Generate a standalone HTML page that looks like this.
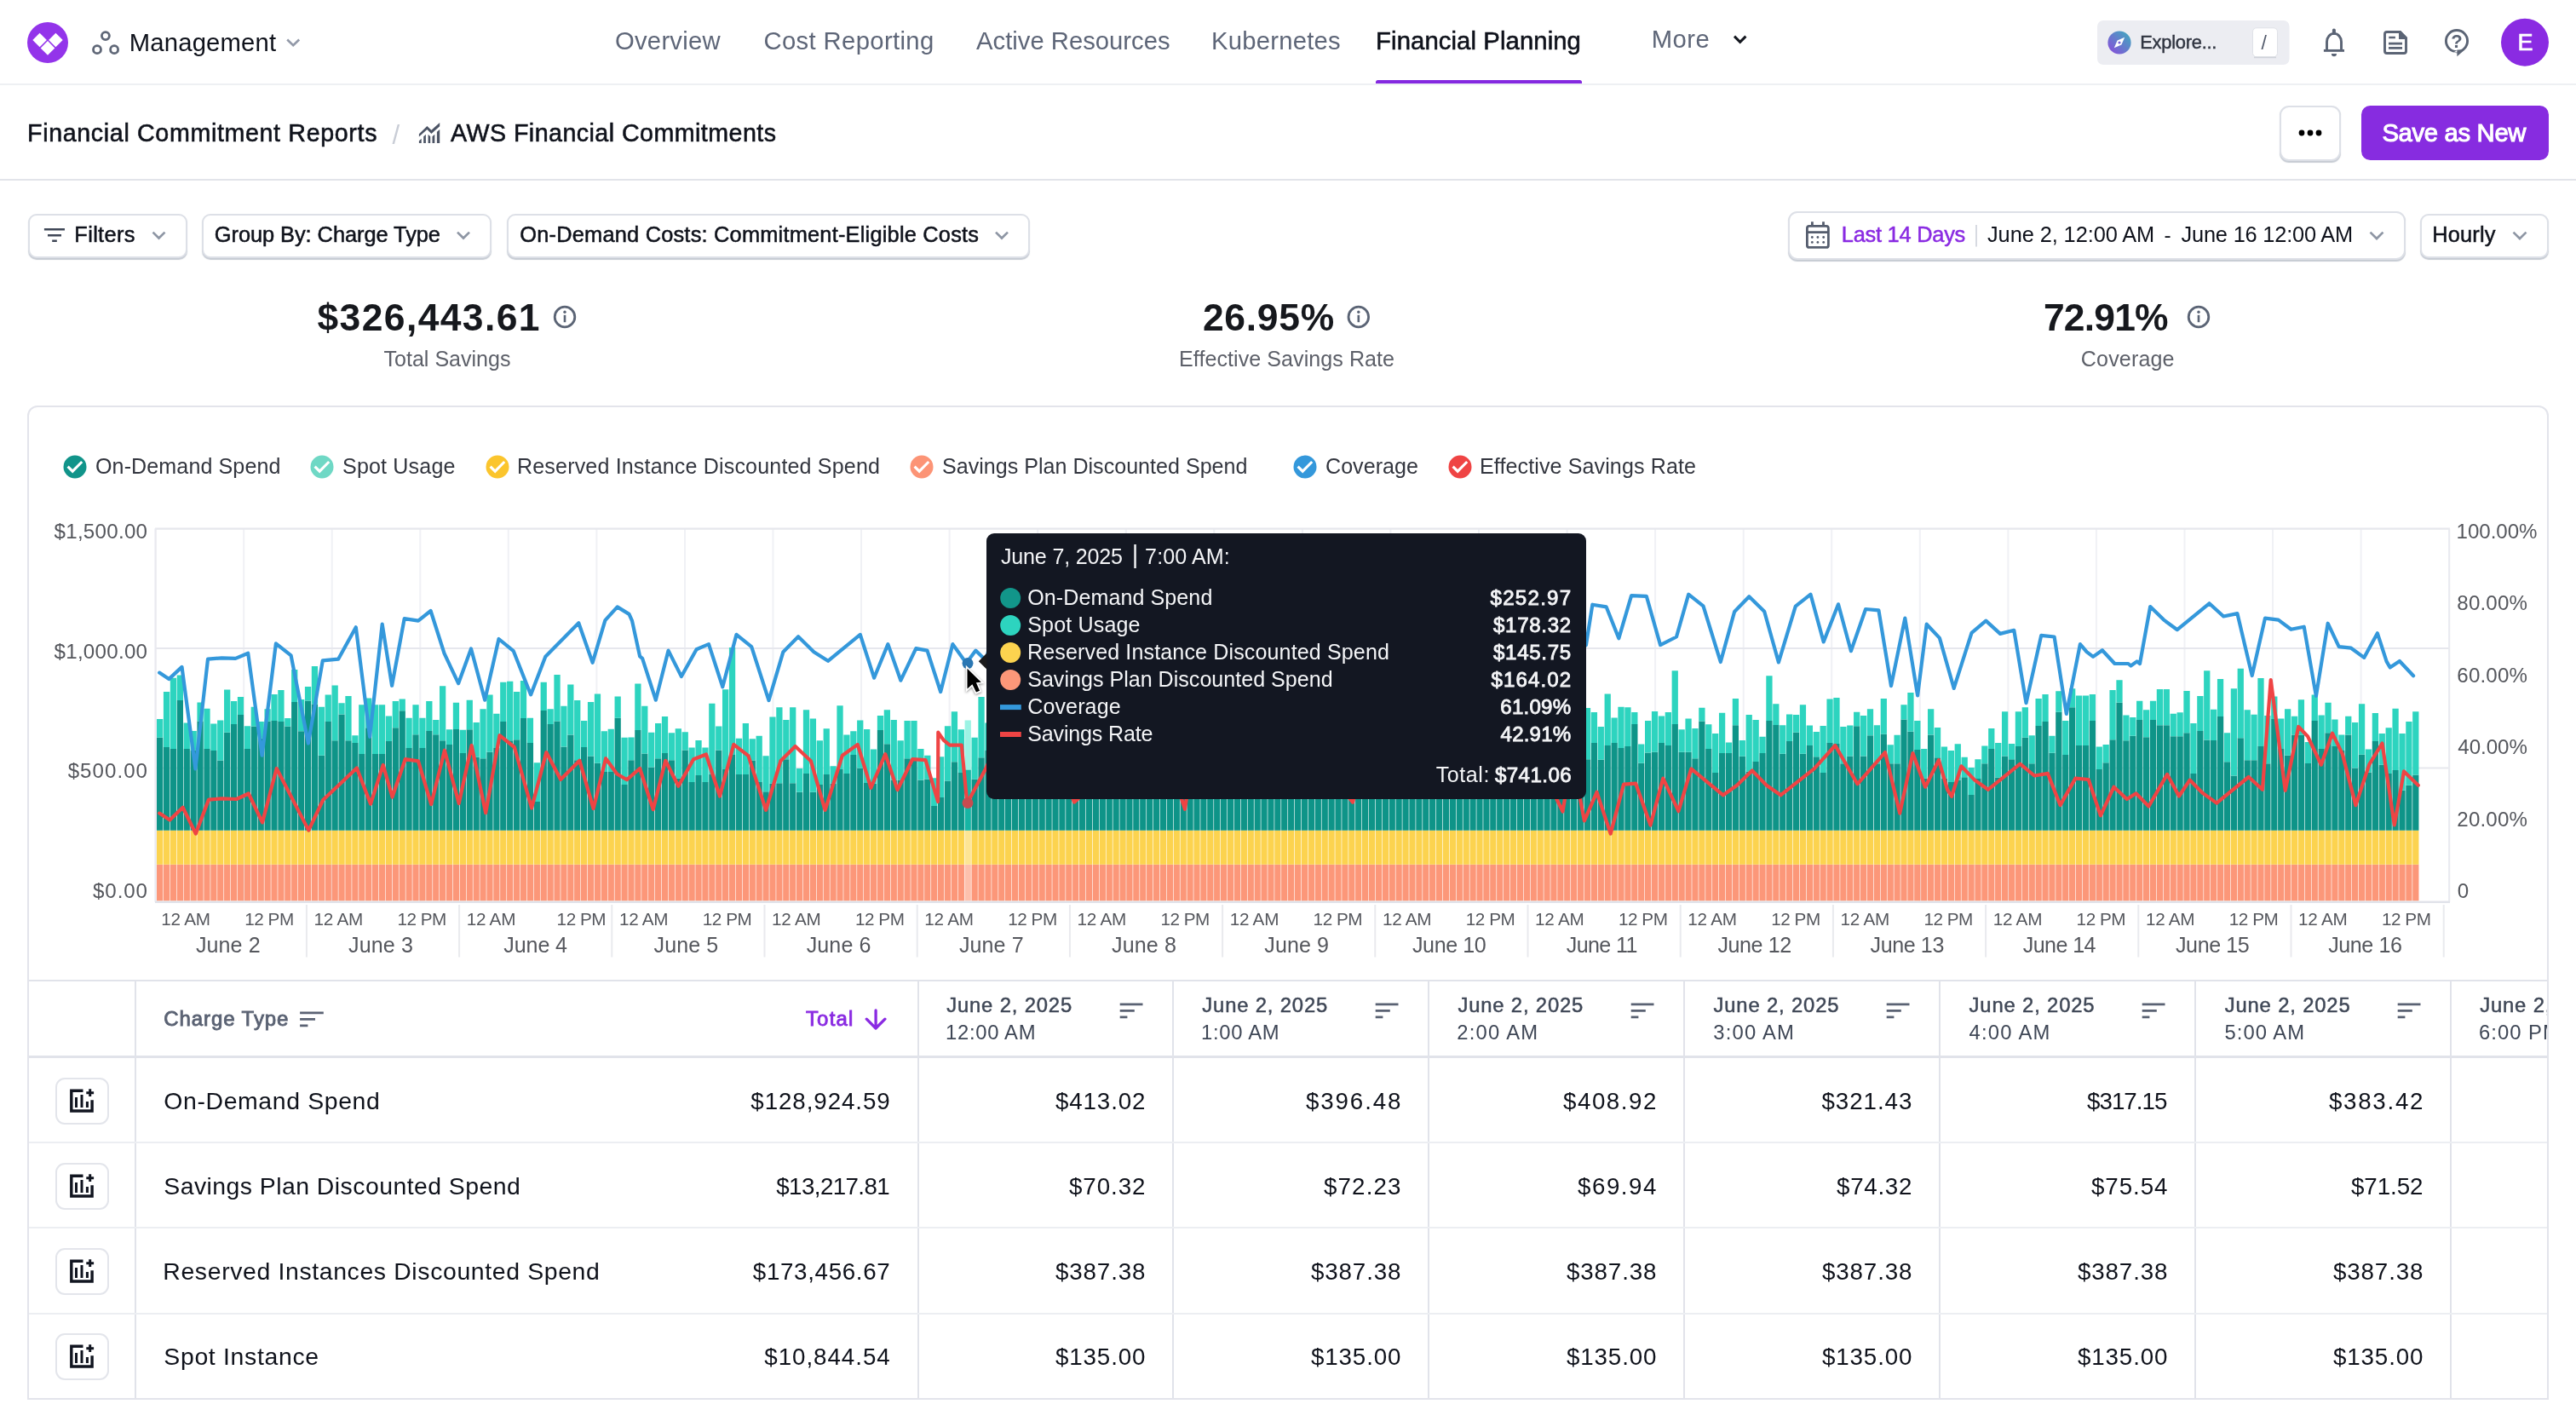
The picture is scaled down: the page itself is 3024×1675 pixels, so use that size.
<!DOCTYPE html>
<html lang="en">
<head>
<meta charset="utf-8">
<title>AWS Financial Commitments - Financial Commitment Reports</title>
<style>
html,body{margin:0;padding:0;background:#fff;}
body{width:3024px;height:1675px;position:relative;overflow:hidden;font-family:"Liberation Sans","DejaVu Sans",sans-serif;}
.t{position:absolute;white-space:nowrap;line-height:1;font-family:"Liberation Sans", "DejaVu Sans", sans-serif;}
.abs{position:absolute;}
.hline{position:absolute;left:0;width:3024px;background:#e6e8ed;}
.btn{position:absolute;box-sizing:border-box;background:#fff;border:2px solid #dde0e7;border-radius:10px;box-shadow:0 1.500px 1px rgba(120,130,150,.42);}
svg{position:absolute;overflow:visible;}
.card{position:absolute;left:32px;top:476px;width:2960px;height:1166.500px;box-sizing:border-box;border:2px solid #e3e4eb;border-radius:12px 12px 0 0;}
.vsep{position:absolute;width:2px;background:#e1e3ea;top:1152px;height:489px;}
.rsep{position:absolute;left:34px;width:2956px;height:2px;background:#eceef2;}
.ibtn{position:absolute;left:64.5px;width:63px;height:55px;box-sizing:border-box;border:2px solid #e3e5eb;border-radius:11px;background:#fff;}
</style>
</head>
<body>
<div id="app" style="position:absolute;left:0;top:0;width:3024px;height:1675px;will-change:transform;">
<header id="topnav">
  <svg width="3024" height="100" viewBox="0 0 3024 100" style="left:0;top:0">
    <!-- logo -->
    <circle cx="56" cy="50" r="24" fill="#9334ea"/>
    <g fill="#fff">
      <path d="M46.6 38.7 L54.9 47 L46.6 55.3 L38.3 47 Z"/>
      <path d="M65.4 38.7 L73.7 47 L65.4 55.3 L57.1 47 Z"/>
      <path d="M56 48.1 L64.3 56.4 L56 64.7 L47.7 56.4 Z"/>
    </g>
    <!-- management icon -->
    <g fill="none" stroke="#5f6777" stroke-width="2.800">
      <circle cx="123.900" cy="42.100" r="4.500"/><circle cx="114" cy="58.200" r="4.500"/><circle cx="134.100" cy="58.200" r="4.500"/>
    </g>
    <path d="M337.2 46.5 L344.2 53.3 L351.2 46.5" fill="none" stroke="#9299a8" stroke-width="2.6"/>
    <!-- more chevron -->
    <path d="M2036 42.6 L2042.7 49.3 L2049.4 42.6" fill="none" stroke="#14171f" stroke-width="3"/>
    <!-- active underline -->
    <path d="M1615 98 V96.500 a2.500 2.500 0 0 1 2.500 -2.500 H1854.500 a2.500 2.500 0 0 1 2.500 2.500 V98 Z" fill="#8429e0"/>
    <!-- explore box -->
    <rect x="2462" y="24" width="225.6" height="52" rx="7" fill="#ecedf2"/>
    <defs><linearGradient id="cg" x1="0" y1="1" x2="1" y2="0"><stop offset="0" stop-color="#8d48dc"/><stop offset="1" stop-color="#3bb0bd"/></linearGradient></defs>
    <circle cx="2488" cy="50" r="13.6" fill="url(#cg)"/>
    <path d="M2494.2 43.8 L2490.4 52.4 L2481.8 56.2 L2485.6 47.6 Z" fill="#fff"/>
    <circle cx="2488" cy="50" r="1.6" fill="#7a63d6"/>
    <rect x="2644.5" y="32.8" width="29" height="34" rx="4.5" fill="#fff" stroke="#dfe1e7" stroke-width="1"/>
    <path d="M2646 67.4 H2672" stroke="#cfd2da" stroke-width="1.6"/>
    <!-- bell -->
    <g fill="none" stroke="#5b6475" stroke-width="2.9">
      <path d="M2731.5 59.4 V49 a8.5 9.6 0 0 1 17 0 V59.4"/>
      <path d="M2727.9 59.4 H2752"/>
      <path d="M2739.9 35.6 V39" stroke-width="4" stroke-linecap="round"/>
    </g>
    <path d="M2736.9 63 H2743 a3.05 3.2 0 0 1 -6.1 0 Z" fill="#5b6475"/>
    <!-- doc -->
    <g>
      <path d="M2802 37.5 H2817.5 L2824.5 44.6 V60 a2.5 2.5 0 0 1 -2.5 2.5 H2802 a2.5 2.5 0 0 1 -2.500 -2.5 V40 a2.5 2.5 0 0 1 2.5 -2.5 Z" fill="none" stroke="#5b6475" stroke-width="2.9"/>
      <path d="M2816 36.1 H2818 L2825.9 44 V46 H2816 Z" fill="#5b6475"/>
      <path d="M2804.3 44 H2811.9 M2804 51.1 H2820 M2804 56.4 H2820" stroke="#5b6475" stroke-width="2.7"/>
    </g>
    <!-- help -->
    <circle cx="2884" cy="48.1" r="12.6" fill="none" stroke="#5b6475" stroke-width="2.9"/>
    <path d="M2884.400 58.500 L2893.200 58.500 L2884.400 66.300 Z" fill="#5b6475"/>
    <path d="M2880 61.600 L2884.400 61.600 L2884.400 59.200 Z" fill="#fff"/>
    <text x="2884" y="55.800" font-size="22" font-weight="700" fill="#5b6475" text-anchor="middle" font-family="Liberation Sans, sans-serif">?</text>
    <!-- avatar -->
    <circle cx="2964" cy="49.7" r="28" fill="#8a2be2"/>
  </svg>
  <div class="hline" style="top:98px;height:2px;background:#eef0f3"></div>
<span class="t" id="t0" style="left:151.8px;top:36.0px;font-size:29.26px;color:#0f121b;letter-spacing:0.177px;">Management</span>
<span class="t" id="t1" style="left:722.0px;top:34.0px;font-size:29.26px;color:#5e6678;letter-spacing:0.246px;">Overview</span>
<span class="t" id="t2" style="left:896.5px;top:34.0px;font-size:29.26px;color:#5e6678;letter-spacing:0.359px;">Cost Reporting</span>
<span class="t" id="t3" style="left:1146.0px;top:34.0px;font-size:29.26px;color:#5e6678;letter-spacing:0.003px;">Active Resources</span>
<span class="t" id="t4" style="left:1422.0px;top:34.0px;font-size:29.26px;color:#5e6678;letter-spacing:0.224px;">Kubernetes</span>
<span class="t" id="t5" style="left:1615.1px;top:34.0px;font-size:29.26px;color:#0f121b;-webkit-text-stroke:0.59px #0f121b;letter-spacing:0.103px;">Financial Planning</span>
<span class="t" id="t6" style="left:1938.8px;top:32.0px;font-size:29.26px;color:#5e6678;letter-spacing:0.409px;">More</span>
<span class="t" id="t7" style="left:2512.2px;top:39.0px;font-size:21.95px;color:#2f3440;-webkit-text-stroke:0.44px #2f3440;letter-spacing:-0.268px;">Explore...</span>
<span class="t" id="t8" style="left:2654.5px;top:39.0px;font-size:23.11px;color:#555d6e;letter-spacing:0.000px;">/</span>
<span class="t" id="t9" style="left:2955.6px;top:36.0px;font-size:27.17px;color:#ffffff;-webkit-text-stroke:0.54px #ffffff;letter-spacing:0.000px;">E</span>
</header>

<section id="breadcrumb">
  <svg width="3024" height="112" viewBox="0 100 3024 112" style="left:0;top:100px">
    <g fill="#4c5465">
      <path d="M491.9 157.2 L501.4 147.9 L506.4 152.8 L516.2 144 V148.2 L506.4 157 L501.4 152 L491.9 160.4 Z"/>
      <path d="M491.9 165.4 L494.7 162.8 V168 H491.9 Z"/>
      <path d="M497.2 160.3 L499.9 157.7 V168 H497.2 Z"/>
      <path d="M502.6 157.7 L505.2 160.3 V168 H502.6 Z"/>
      <path d="M507.5 160.3 L510.3 157.7 V168 H507.500 Z"/>
      <path d="M512.9 154.7 L516.2 151.9 V168 H512.9 Z"/>
    </g>
  </svg>
  <div class="btn" style="left:2676px;top:124px;width:72px;height:65px;border-radius:11px;"></div>
  <svg width="40" height="10" viewBox="0 0 40 10" style="left:2692px;top:151px"><circle cx="10" cy="5" r="3.400" fill="#000"/><circle cx="20" cy="5" r="3.400" fill="#000"/><circle cx="30" cy="5" r="3.400" fill="#000"/></svg>
  <div class="abs" style="left:2772px;top:124px;width:220px;height:64px;border-radius:10.500px;background:#872ce0;"></div>
  <div class="hline" style="top:210px;height:2px;background:#e2e4ea"></div>
<span class="t" id="t10" style="left:32.0px;top:142.0px;font-size:28.63px;color:#0f121b;-webkit-text-stroke:0.57px #0f121b;letter-spacing:0.649px;">Financial Commitment Reports</span>
<span class="t" id="t11" style="left:460.6px;top:143.0px;font-size:31.15px;color:#c9cdd6;letter-spacing:0.000px;">/</span>
<span class="t" id="t12" style="left:529.0px;top:142.0px;font-size:28.63px;color:#0f121b;-webkit-text-stroke:0.57px #0f121b;letter-spacing:0.454px;">AWS Financial Commitments</span>
<span class="t" id="t13" style="left:2796.4px;top:142.0px;font-size:29.26px;color:#ffffff;-webkit-text-stroke:1.05px #ffffff;letter-spacing:-0.326px;">Save as New</span>
</section>

<section id="toolbar">
  <div class="btn" style="left:32.500px;top:250.500px;width:187px;height:52.500px;"></div>
  <div class="btn" style="left:236.500px;top:250.500px;width:340.500px;height:52.500px;"></div>
  <div class="btn" style="left:594.500px;top:250.500px;width:614.500px;height:52.500px;"></div>
  <div class="btn" style="left:2098.500px;top:248px;width:725.500px;height:57px;border-radius:11px;"></div>
  <div class="btn" style="left:2840.500px;top:250.500px;width:151.500px;height:52.500px;"></div>
  <svg width="3024" height="70" viewBox="0 240 3024 70" style="left:0;top:240px">
    <path d="M51.9 269.200 H76 M56 276.200 H72 M61.2 282.800 H66.8" stroke="#3f4756" stroke-width="2.6" fill="none"/>
    <g fill="none" stroke="#8e96a4" stroke-width="2.7">
      <path d="M179.500 272.600 L186.500 279.500 L193.500 272.600"/>
      <path d="M537 272.600 L544 279.500 L551 272.600"/>
      <path d="M1169 272.600 L1176 279.500 L1183 272.600"/>
      <path d="M2782.500 272.600 L2790 280 L2797.500 272.600"/>
      <path d="M2950.500 272.600 L2958 280 L2965.500 272.600"/>
    </g>
    <!-- calendar -->
    <g fill="none" stroke="#555d6e" stroke-width="2.8">
      <rect x="2121.400" y="265.400" width="25" height="25" rx="2.5"/>
      <path d="M2121.400 272.600 H2146.400 M2127.400 260.200 V265 M2140.500 260.200 V265"/>
    </g>
    <g fill="#555d6e"><circle cx="2127.300" cy="278.500" r="1.4"/><circle cx="2133.900" cy="278.500" r="1.4"/><circle cx="2140.700" cy="278.500" r="1.4"/><circle cx="2127.300" cy="284.400" r="1.4"/><circle cx="2133.900" cy="284.400" r="1.4"/><circle cx="2140.700" cy="284.400" r="1.4"/></g>
    <rect x="2319" y="264" width="2" height="25.500" fill="#d7dae1"/>
  </svg>
<span class="t" id="t14" style="left:87.3px;top:263.0px;font-size:25.39px;color:#0f121b;-webkit-text-stroke:0.51px #0f121b;letter-spacing:0.351px;">Filters</span>
<span class="t" id="t15" style="left:251.8px;top:263.0px;font-size:25.39px;color:#0f121b;-webkit-text-stroke:0.51px #0f121b;letter-spacing:-0.048px;">Group By: Charge Type</span>
<span class="t" id="t16" style="left:610.3px;top:263.0px;font-size:25.39px;color:#0f121b;-webkit-text-stroke:0.51px #0f121b;letter-spacing:0.207px;">On-Demand Costs: Commitment-Eligible Costs</span>
<span class="t" id="t17" style="left:2161.8px;top:263.0px;font-size:25.39px;color:#8a2be2;-webkit-text-stroke:0.51px #8a2be2;letter-spacing:-0.238px;">Last 14 Days</span>
<span class="t" id="t18" style="left:2333.0px;top:263.0px;font-size:25.39px;color:#0f121b;letter-spacing:-0.084px;">June 2, 12:00 AM</span>
<span class="t" id="t19" style="left:2540.5px;top:264.0px;font-size:24.42px;color:#0f121b;letter-spacing:0.000px;">-</span>
<span class="t" id="t20" style="left:2560.5px;top:263.0px;font-size:25.39px;color:#0f121b;letter-spacing:-0.188px;">June 16 12:00 AM</span>
<span class="t" id="t21" style="left:2855.3px;top:263.0px;font-size:25.39px;color:#0f121b;-webkit-text-stroke:0.51px #0f121b;letter-spacing:0.171px;">Hourly</span>
</section>

<section id="stats">
  <svg width="3024" height="40" viewBox="0 352 3024 40" style="left:0;top:352px">
    <g fill="none" stroke="#5b6475" stroke-width="2.800">
      <circle cx="663" cy="372" r="11.800"/><circle cx="1594.800" cy="372" r="11.800"/><circle cx="2581" cy="372" r="11.800"/>
    </g>
    <g fill="#5b6475">
      <rect x="661.700" y="369.800" width="2.6" height="8.400"/><circle cx="663" cy="366.200" r="1.700"/>
      <rect x="1593.500" y="369.800" width="2.6" height="8.400"/><circle cx="1594.800" cy="366.200" r="1.700"/>
      <rect x="2579.700" y="369.800" width="2.6" height="8.400"/><circle cx="2581" cy="366.200" r="1.700"/>
    </g>
  </svg>
<span class="t" id="t22" style="left:372.5px;top:351.0px;font-size:44.42px;color:#16181d;font-weight:700;letter-spacing:1.405px;">$326,443.61</span>
<span class="t" id="t23" style="left:450.5px;top:409.0px;font-size:25.08px;color:#5d6069;letter-spacing:-0.010px;">Total Savings</span>
<span class="t" id="t24" style="left:1411.9px;top:351.0px;font-size:44.42px;color:#16181d;font-weight:700;letter-spacing:0.735px;">26.95%</span>
<span class="t" id="t25" style="left:1384.1px;top:409.0px;font-size:25.08px;color:#5d6069;letter-spacing:0.052px;">Effective Savings Rate</span>
<span class="t" id="t26" style="left:2399.0px;top:351.0px;font-size:44.42px;color:#16181d;font-weight:700;letter-spacing:-0.825px;">72.91%</span>
<span class="t" id="t27" style="left:2442.8px;top:409.0px;font-size:25.08px;color:#5d6069;letter-spacing:0.137px;">Coverage</span>
</section>

<main id="report">
  <div class="card"></div>
  <svg width="3024" height="40" viewBox="0 530 3024 40" style="left:0;top:530px">
    <g>
      <circle cx="88" cy="548" r="13.500" fill="#11948a"/><circle cx="378" cy="548" r="13.500" fill="#6fd8c5"/><circle cx="584" cy="548" r="13.500" fill="#fbc52d"/>
      <circle cx="1082" cy="548" r="13.500" fill="#fc9476"/><circle cx="1532" cy="548" r="13.500" fill="#3498db"/><circle cx="1714" cy="548" r="13.500" fill="#ef4444"/>
    </g>
    <g fill="none" stroke="#fff" stroke-width="3.100" stroke-linejoin="miter">
      <path d="M79.6 547.600 L85.2 553.200 L96.2 542"/><path d="M369.6 547.600 L375.2 553.200 L386.2 542"/><path d="M575.6 547.600 L581.2 553.200 L592.2 542"/><path d="M1073.6 547.600 L1079.2 553.200 L1090.2 542"/><path d="M1523.6 547.600 L1529.2 553.200 L1540.2 542"/><path d="M1705.6 547.600 L1711.2 553.200 L1722.2 542"/>
    </g>
  </svg>
<span class="t" id="t28" style="left:112.0px;top:535.0px;font-size:25.08px;color:#33363f;letter-spacing:0.098px;">On-Demand Spend</span>
<span class="t" id="t29" style="left:402.0px;top:535.0px;font-size:25.08px;color:#33363f;letter-spacing:0.155px;">Spot Usage</span>
<span class="t" id="t30" style="left:607.0px;top:535.0px;font-size:25.08px;color:#33363f;letter-spacing:0.149px;">Reserved Instance Discounted Spend</span>
<span class="t" id="t31" style="left:1106.0px;top:535.0px;font-size:25.08px;color:#33363f;letter-spacing:0.005px;">Savings Plan Discounted Spend</span>
<span class="t" id="t32" style="left:1556.0px;top:535.0px;font-size:25.08px;color:#33363f;letter-spacing:0.030px;">Coverage</span>
<span class="t" id="t33" style="left:1737.0px;top:535.0px;font-size:25.08px;color:#33363f;letter-spacing:0.100px;">Effective Savings Rate</span>
<span class="t" id="t80" style="left:63.5px;top:612.0px;font-size:24.12px;color:#55575d;letter-spacing:0.282px;">$1,500.00</span>
<span class="t" id="t81" style="left:63.5px;top:753.0px;font-size:24.12px;color:#55575d;letter-spacing:0.282px;">$1,000.00</span>
<span class="t" id="t82" style="left:79.7px;top:893.0px;font-size:24.12px;color:#55575d;letter-spacing:1.027px;">$500.00</span>
<span class="t" id="t83" style="left:109.0px;top:1034.0px;font-size:24.12px;color:#55575d;letter-spacing:0.919px;">$0.00</span>
<span class="t" id="t84" style="left:2883.5px;top:612.0px;font-size:24.12px;color:#55575d;letter-spacing:-0.023px;">100.00%</span>
<span class="t" id="t85" style="left:2884.3px;top:696.0px;font-size:24.12px;color:#55575d;letter-spacing:0.174px;">80.00%</span>
<span class="t" id="t86" style="left:2884.3px;top:781.0px;font-size:24.12px;color:#55575d;letter-spacing:0.174px;">60.00%</span>
<span class="t" id="t87" style="left:2885.3px;top:865.0px;font-size:24.12px;color:#55575d;letter-spacing:-0.026px;">40.00%</span>
<span class="t" id="t88" style="left:2884.3px;top:950.0px;font-size:24.12px;color:#55575d;letter-spacing:0.174px;">20.00%</span>
<span class="t" id="t89" style="left:2884.8px;top:1034.0px;font-size:24.12px;color:#55575d;letter-spacing:0.000px;">0</span>
<span class="t" id="t90" style="left:189.3px;top:1069.0px;font-size:20.69px;color:#55575d;letter-spacing:-0.239px;">12 AM</span>
<span class="t" id="t91" style="left:287.2px;top:1069.0px;font-size:20.69px;color:#55575d;letter-spacing:-0.464px;">12 PM</span>
<span class="t" id="t92" style="left:229.9px;top:1097.0px;font-size:25.08px;color:#55575d;letter-spacing:0.090px;">June 2</span>
<span class="t" id="t93" style="left:368.5px;top:1069.0px;font-size:20.69px;color:#55575d;letter-spacing:-0.239px;">12 AM</span>
<span class="t" id="t94" style="left:466.4px;top:1069.0px;font-size:20.69px;color:#55575d;letter-spacing:-0.464px;">12 PM</span>
<span class="t" id="t95" style="left:409.1px;top:1097.0px;font-size:25.08px;color:#55575d;letter-spacing:0.090px;">June 3</span>
<span class="t" id="t96" style="left:547.7px;top:1069.0px;font-size:20.69px;color:#55575d;letter-spacing:-0.239px;">12 AM</span>
<span class="t" id="t97" style="left:653.6px;top:1069.0px;font-size:20.69px;color:#55575d;letter-spacing:-0.464px;">12 PM</span>
<span class="t" id="t98" style="left:591.3px;top:1097.0px;font-size:25.08px;color:#55575d;letter-spacing:-0.110px;">June 4</span>
<span class="t" id="t99" style="left:726.9px;top:1069.0px;font-size:20.69px;color:#55575d;letter-spacing:-0.239px;">12 AM</span>
<span class="t" id="t100" style="left:824.8px;top:1069.0px;font-size:20.69px;color:#55575d;letter-spacing:-0.464px;">12 PM</span>
<span class="t" id="t101" style="left:767.5px;top:1097.0px;font-size:25.08px;color:#55575d;letter-spacing:0.090px;">June 5</span>
<span class="t" id="t102" style="left:906.1px;top:1069.0px;font-size:20.69px;color:#55575d;letter-spacing:-0.239px;">12 AM</span>
<span class="t" id="t103" style="left:1004.0px;top:1069.0px;font-size:20.69px;color:#55575d;letter-spacing:-0.464px;">12 PM</span>
<span class="t" id="t104" style="left:946.7px;top:1097.0px;font-size:25.08px;color:#55575d;letter-spacing:0.090px;">June 6</span>
<span class="t" id="t105" style="left:1085.3px;top:1069.0px;font-size:20.69px;color:#55575d;letter-spacing:-0.239px;">12 AM</span>
<span class="t" id="t106" style="left:1183.2px;top:1069.0px;font-size:20.69px;color:#55575d;letter-spacing:-0.464px;">12 PM</span>
<span class="t" id="t107" style="left:1125.9px;top:1097.0px;font-size:25.08px;color:#55575d;letter-spacing:0.090px;">June 7</span>
<span class="t" id="t108" style="left:1264.5px;top:1069.0px;font-size:20.69px;color:#55575d;letter-spacing:-0.239px;">12 AM</span>
<span class="t" id="t109" style="left:1362.4px;top:1069.0px;font-size:20.69px;color:#55575d;letter-spacing:-0.464px;">12 PM</span>
<span class="t" id="t110" style="left:1305.1px;top:1097.0px;font-size:25.08px;color:#55575d;letter-spacing:0.090px;">June 8</span>
<span class="t" id="t111" style="left:1443.7px;top:1069.0px;font-size:20.69px;color:#55575d;letter-spacing:-0.239px;">12 AM</span>
<span class="t" id="t112" style="left:1541.6px;top:1069.0px;font-size:20.69px;color:#55575d;letter-spacing:-0.464px;">12 PM</span>
<span class="t" id="t113" style="left:1484.3px;top:1097.0px;font-size:25.08px;color:#55575d;letter-spacing:0.090px;">June 9</span>
<span class="t" id="t114" style="left:1622.9px;top:1069.0px;font-size:20.69px;color:#55575d;letter-spacing:-0.239px;">12 AM</span>
<span class="t" id="t115" style="left:1720.8px;top:1069.0px;font-size:20.69px;color:#55575d;letter-spacing:-0.464px;">12 PM</span>
<span class="t" id="t116" style="left:1658.0px;top:1097.0px;font-size:25.08px;color:#55575d;letter-spacing:-0.416px;">June 10</span>
<span class="t" id="t117" style="left:1802.1px;top:1069.0px;font-size:20.69px;color:#55575d;letter-spacing:-0.239px;">12 AM</span>
<span class="t" id="t118" style="left:1900.0px;top:1069.0px;font-size:20.69px;color:#55575d;letter-spacing:-0.464px;">12 PM</span>
<span class="t" id="t119" style="left:1838.8px;top:1097.0px;font-size:25.08px;color:#55575d;letter-spacing:-0.639px;">June 11</span>
<span class="t" id="t120" style="left:1981.3px;top:1069.0px;font-size:20.69px;color:#55575d;letter-spacing:-0.239px;">12 AM</span>
<span class="t" id="t121" style="left:2079.2px;top:1069.0px;font-size:20.69px;color:#55575d;letter-spacing:-0.464px;">12 PM</span>
<span class="t" id="t122" style="left:2016.4px;top:1097.0px;font-size:25.08px;color:#55575d;letter-spacing:-0.416px;">June 12</span>
<span class="t" id="t123" style="left:2160.5px;top:1069.0px;font-size:20.69px;color:#55575d;letter-spacing:-0.239px;">12 AM</span>
<span class="t" id="t124" style="left:2258.4px;top:1069.0px;font-size:20.69px;color:#55575d;letter-spacing:-0.464px;">12 PM</span>
<span class="t" id="t125" style="left:2195.6px;top:1097.0px;font-size:25.08px;color:#55575d;letter-spacing:-0.416px;">June 13</span>
<span class="t" id="t126" style="left:2339.7px;top:1069.0px;font-size:20.69px;color:#55575d;letter-spacing:-0.239px;">12 AM</span>
<span class="t" id="t127" style="left:2437.6px;top:1069.0px;font-size:20.69px;color:#55575d;letter-spacing:-0.464px;">12 PM</span>
<span class="t" id="t128" style="left:2374.8px;top:1097.0px;font-size:25.08px;color:#55575d;letter-spacing:-0.583px;">June 14</span>
<span class="t" id="t129" style="left:2518.9px;top:1069.0px;font-size:20.69px;color:#55575d;letter-spacing:-0.239px;">12 AM</span>
<span class="t" id="t130" style="left:2616.8px;top:1069.0px;font-size:20.69px;color:#55575d;letter-spacing:-0.464px;">12 PM</span>
<span class="t" id="t131" style="left:2554.0px;top:1097.0px;font-size:25.08px;color:#55575d;letter-spacing:-0.416px;">June 15</span>
<span class="t" id="t132" style="left:2698.1px;top:1069.0px;font-size:20.69px;color:#55575d;letter-spacing:-0.239px;">12 AM</span>
<span class="t" id="t133" style="left:2796.0px;top:1069.0px;font-size:20.69px;color:#55575d;letter-spacing:-0.464px;">12 PM</span>
<span class="t" id="t134" style="left:2733.2px;top:1097.0px;font-size:25.08px;color:#55575d;letter-spacing:-0.416px;">June 16</span>
<svg id="chart" width="3024" height="560" viewBox="0 600 3024 560" style="left:0;top:600px" font-family="Liberation Sans, sans-serif">
<path d="M182.6 621 V1058 M286.2 621 V1058 M389.7 621 V1058 M493.3 621 V1058 M596.8 621 V1058 M700.4 621 V1058 M804.0 621 V1058 M907.5 621 V1058 M1011.1 621 V1058 M1114.6 621 V1058 M1218.2 621 V1058 M1321.8 621 V1058 M1425.3 621 V1058 M1528.9 621 V1058 M1632.4 621 V1058 M1736.0 621 V1058 M1839.6 621 V1058 M1943.1 621 V1058 M2046.7 621 V1058 M2150.2 621 V1058 M2253.8 621 V1058 M2357.4 621 V1058 M2460.9 621 V1058 M2564.5 621 V1058 M2668.0 621 V1058 M2771.6 621 V1058 M2875.2 621 V1058" stroke="#f0f1f5" stroke-width="2" fill="none"/>
<path d="M182 620.700 H2876 M182 761 H2876 M182 901.500 H2876" stroke="#e6e7ed" stroke-width="2.200" fill="none"/>
<path d="M182.6 620 V1059 M2875.200 620 V1059" stroke="#e9eaef" stroke-width="2" fill="none"/>
<g id="bars">
<path d="M184.00 1014.7h7.27V1057.5h-7.27zM191.91 1014.7h7.27V1057.5h-7.27zM199.81 1014.7h7.27V1057.5h-7.27zM207.72 1014.7h7.27V1057.5h-7.27zM215.62 1014.7h7.27V1057.5h-7.27zM223.53 1014.7h7.27V1057.5h-7.27zM231.43 1014.7h7.27V1057.5h-7.27zM239.34 1014.7h7.27V1057.5h-7.27zM247.24 1014.7h7.27V1057.5h-7.27zM255.14 1014.7h7.27V1057.5h-7.27zM263.05 1014.7h7.27V1057.5h-7.27zM270.95 1014.7h7.27V1057.5h-7.27zM278.86 1014.7h7.27V1057.5h-7.27zM286.76 1014.7h7.27V1057.5h-7.27zM294.67 1014.7h7.27V1057.5h-7.27zM302.57 1014.7h7.27V1057.5h-7.27zM310.48 1014.7h7.27V1057.5h-7.27zM318.38 1014.7h7.27V1057.5h-7.27zM326.29 1014.7h7.27V1057.5h-7.27zM334.19 1014.7h7.27V1057.5h-7.27zM342.10 1014.7h7.27V1057.5h-7.27zM350.00 1014.7h7.27V1057.5h-7.27zM357.91 1014.7h7.27V1057.5h-7.27zM365.81 1014.7h7.27V1057.5h-7.27zM373.72 1014.7h7.27V1057.5h-7.27zM381.62 1014.7h7.27V1057.5h-7.27zM389.53 1014.7h7.27V1057.5h-7.27zM397.44 1014.7h7.27V1057.5h-7.27zM405.34 1014.7h7.27V1057.5h-7.27zM413.25 1014.7h7.27V1057.5h-7.27zM421.15 1014.7h7.27V1057.5h-7.27zM429.06 1014.7h7.27V1057.5h-7.27zM436.96 1014.7h7.27V1057.5h-7.27zM444.87 1014.7h7.27V1057.5h-7.27zM452.77 1014.7h7.27V1057.5h-7.27zM460.68 1014.7h7.27V1057.5h-7.27zM468.58 1014.7h7.27V1057.5h-7.27zM476.49 1014.7h7.27V1057.5h-7.27zM484.39 1014.7h7.27V1057.5h-7.27zM492.30 1014.7h7.27V1057.5h-7.27zM500.20 1014.7h7.27V1057.5h-7.27zM508.11 1014.7h7.27V1057.5h-7.27zM516.01 1014.7h7.27V1057.5h-7.27zM523.91 1014.7h7.27V1057.5h-7.27zM531.82 1014.7h7.27V1057.5h-7.27zM539.73 1014.7h7.27V1057.5h-7.27zM547.63 1014.7h7.27V1057.5h-7.27zM555.54 1014.7h7.27V1057.5h-7.27zM563.44 1014.7h7.27V1057.5h-7.27zM571.35 1014.7h7.27V1057.5h-7.27zM579.25 1014.7h7.27V1057.5h-7.27zM587.15 1014.7h7.27V1057.5h-7.27zM595.06 1014.7h7.27V1057.5h-7.27zM602.97 1014.7h7.27V1057.5h-7.27zM610.87 1014.7h7.27V1057.5h-7.27zM618.78 1014.7h7.27V1057.5h-7.27zM626.68 1014.7h7.27V1057.5h-7.27zM634.59 1014.7h7.27V1057.5h-7.27zM642.49 1014.7h7.27V1057.5h-7.27zM650.39 1014.7h7.27V1057.5h-7.27zM658.30 1014.7h7.27V1057.5h-7.27zM666.21 1014.7h7.27V1057.5h-7.27zM674.11 1014.7h7.27V1057.5h-7.27zM682.02 1014.7h7.27V1057.5h-7.27zM689.92 1014.7h7.27V1057.5h-7.27zM697.83 1014.7h7.27V1057.5h-7.27zM705.73 1014.7h7.27V1057.5h-7.27zM713.63 1014.7h7.27V1057.5h-7.27zM721.54 1014.7h7.27V1057.5h-7.27zM729.45 1014.7h7.27V1057.5h-7.27zM737.35 1014.7h7.27V1057.5h-7.27zM745.25 1014.7h7.27V1057.5h-7.27zM753.16 1014.7h7.27V1057.5h-7.27zM761.07 1014.7h7.27V1057.5h-7.27zM768.97 1014.7h7.27V1057.5h-7.27zM776.88 1014.7h7.27V1057.5h-7.27zM784.78 1014.7h7.27V1057.5h-7.27zM792.69 1014.7h7.27V1057.5h-7.27zM800.59 1014.7h7.27V1057.5h-7.27zM808.50 1014.7h7.27V1057.5h-7.27zM816.40 1014.7h7.27V1057.5h-7.27zM824.31 1014.7h7.27V1057.5h-7.27zM832.21 1014.7h7.27V1057.5h-7.27zM840.12 1014.7h7.27V1057.5h-7.27zM848.02 1014.7h7.27V1057.5h-7.27zM855.93 1014.7h7.27V1057.5h-7.27zM863.83 1014.7h7.27V1057.5h-7.27zM871.74 1014.7h7.27V1057.5h-7.27zM879.64 1014.7h7.27V1057.5h-7.27zM887.55 1014.7h7.27V1057.5h-7.27zM895.45 1014.7h7.27V1057.5h-7.27zM903.36 1014.7h7.27V1057.5h-7.27zM911.26 1014.7h7.27V1057.5h-7.27zM919.17 1014.7h7.27V1057.5h-7.27zM927.07 1014.7h7.27V1057.5h-7.27zM934.98 1014.7h7.27V1057.5h-7.27zM942.88 1014.7h7.27V1057.5h-7.27zM950.78 1014.7h7.27V1057.5h-7.27zM958.69 1014.7h7.27V1057.5h-7.27zM966.60 1014.7h7.27V1057.5h-7.27zM974.50 1014.7h7.27V1057.5h-7.27zM982.40 1014.7h7.27V1057.5h-7.27zM990.31 1014.7h7.27V1057.5h-7.27zM998.22 1014.7h7.27V1057.5h-7.27zM1006.12 1014.7h7.27V1057.5h-7.27zM1014.02 1014.7h7.27V1057.5h-7.27zM1021.93 1014.7h7.27V1057.5h-7.27zM1029.84 1014.7h7.27V1057.5h-7.27zM1037.74 1014.7h7.27V1057.5h-7.27zM1045.64 1014.7h7.27V1057.5h-7.27zM1053.55 1014.7h7.27V1057.5h-7.27zM1061.45 1014.7h7.27V1057.5h-7.27zM1069.36 1014.7h7.27V1057.5h-7.27zM1077.26 1014.7h7.27V1057.5h-7.27zM1085.17 1014.7h7.27V1057.5h-7.27zM1093.08 1014.7h7.27V1057.5h-7.27zM1100.98 1014.7h7.27V1057.5h-7.27zM1108.88 1014.7h7.27V1057.5h-7.27zM1116.79 1014.7h7.27V1057.5h-7.27zM1124.70 1014.7h7.27V1057.5h-7.27zM1140.51 1014.7h7.27V1057.5h-7.27zM1148.41 1014.7h7.27V1057.5h-7.27zM1156.32 1014.7h7.27V1057.5h-7.27zM1164.22 1014.7h7.27V1057.5h-7.27zM1172.12 1014.7h7.27V1057.5h-7.27zM1180.03 1014.7h7.27V1057.5h-7.27zM1187.93 1014.7h7.27V1057.5h-7.27zM1195.84 1014.7h7.27V1057.5h-7.27zM1203.74 1014.7h7.27V1057.5h-7.27zM1211.65 1014.7h7.27V1057.5h-7.27zM1219.56 1014.7h7.27V1057.5h-7.27zM1227.46 1014.7h7.27V1057.5h-7.27zM1235.37 1014.7h7.27V1057.5h-7.27zM1243.27 1014.7h7.27V1057.5h-7.27zM1251.17 1014.7h7.27V1057.5h-7.27zM1259.08 1014.7h7.27V1057.5h-7.27zM1266.99 1014.7h7.27V1057.5h-7.27zM1274.89 1014.7h7.27V1057.5h-7.27zM1282.80 1014.7h7.27V1057.5h-7.27zM1290.70 1014.7h7.27V1057.5h-7.27zM1298.61 1014.7h7.27V1057.5h-7.27zM1306.51 1014.7h7.27V1057.5h-7.27zM1314.41 1014.7h7.27V1057.5h-7.27zM1322.32 1014.7h7.27V1057.5h-7.27zM1330.23 1014.7h7.27V1057.5h-7.27zM1338.13 1014.7h7.27V1057.5h-7.27zM1346.04 1014.7h7.27V1057.5h-7.27zM1353.94 1014.7h7.27V1057.5h-7.27zM1361.85 1014.7h7.27V1057.5h-7.27zM1369.75 1014.7h7.27V1057.5h-7.27zM1377.65 1014.7h7.27V1057.5h-7.27zM1385.56 1014.7h7.27V1057.5h-7.27zM1393.47 1014.7h7.27V1057.5h-7.27zM1401.37 1014.7h7.27V1057.5h-7.27zM1409.28 1014.7h7.27V1057.5h-7.27zM1417.18 1014.7h7.27V1057.5h-7.27zM1425.09 1014.7h7.27V1057.5h-7.27zM1432.99 1014.7h7.27V1057.5h-7.27zM1440.89 1014.7h7.27V1057.5h-7.27zM1448.80 1014.7h7.27V1057.5h-7.27zM1456.70 1014.7h7.27V1057.5h-7.27zM1464.61 1014.7h7.27V1057.5h-7.27zM1472.52 1014.7h7.27V1057.5h-7.27zM1480.42 1014.7h7.27V1057.5h-7.27zM1488.33 1014.7h7.27V1057.5h-7.27zM1496.23 1014.7h7.27V1057.5h-7.27zM1504.13 1014.7h7.27V1057.5h-7.27zM1512.04 1014.7h7.27V1057.5h-7.27zM1519.94 1014.7h7.27V1057.5h-7.27zM1527.85 1014.7h7.27V1057.5h-7.27zM1535.76 1014.7h7.27V1057.5h-7.27zM1543.66 1014.7h7.27V1057.5h-7.27zM1551.57 1014.7h7.27V1057.5h-7.27zM1559.47 1014.7h7.27V1057.5h-7.27zM1567.38 1014.7h7.27V1057.5h-7.27zM1575.28 1014.7h7.27V1057.5h-7.27zM1583.18 1014.7h7.27V1057.5h-7.27zM1591.09 1014.7h7.27V1057.5h-7.27zM1599.00 1014.7h7.27V1057.5h-7.27zM1606.90 1014.7h7.27V1057.5h-7.27zM1614.81 1014.7h7.27V1057.5h-7.27zM1622.71 1014.7h7.27V1057.5h-7.27zM1630.62 1014.7h7.27V1057.5h-7.27zM1638.52 1014.7h7.27V1057.5h-7.27zM1646.42 1014.7h7.27V1057.5h-7.27zM1654.33 1014.7h7.27V1057.5h-7.27zM1662.24 1014.7h7.27V1057.5h-7.27zM1670.14 1014.7h7.27V1057.5h-7.27zM1678.05 1014.7h7.27V1057.5h-7.27zM1685.95 1014.7h7.27V1057.5h-7.27zM1693.86 1014.7h7.27V1057.5h-7.27zM1701.76 1014.7h7.27V1057.5h-7.27zM1709.66 1014.7h7.27V1057.5h-7.27zM1717.57 1014.7h7.27V1057.5h-7.27zM1725.48 1014.7h7.27V1057.5h-7.27zM1733.38 1014.7h7.27V1057.5h-7.27zM1741.29 1014.7h7.27V1057.5h-7.27zM1749.19 1014.7h7.27V1057.5h-7.27zM1757.10 1014.7h7.27V1057.5h-7.27zM1765.00 1014.7h7.27V1057.5h-7.27zM1772.90 1014.7h7.27V1057.5h-7.27zM1780.81 1014.7h7.27V1057.5h-7.27zM1788.72 1014.7h7.27V1057.5h-7.27zM1796.62 1014.7h7.27V1057.5h-7.27zM1804.53 1014.7h7.27V1057.5h-7.27zM1812.43 1014.7h7.27V1057.5h-7.27zM1820.34 1014.7h7.27V1057.5h-7.27zM1828.24 1014.7h7.27V1057.5h-7.27zM1836.14 1014.7h7.27V1057.5h-7.27zM1844.05 1014.7h7.27V1057.5h-7.27zM1851.96 1014.7h7.27V1057.5h-7.27zM1859.86 1014.7h7.27V1057.5h-7.27zM1867.77 1014.7h7.27V1057.5h-7.27zM1875.67 1014.7h7.27V1057.5h-7.27zM1883.58 1014.7h7.27V1057.5h-7.27zM1891.48 1014.7h7.27V1057.5h-7.27zM1899.38 1014.7h7.27V1057.5h-7.27zM1907.29 1014.7h7.27V1057.5h-7.27zM1915.20 1014.7h7.27V1057.5h-7.27zM1923.10 1014.7h7.27V1057.5h-7.27zM1931.01 1014.7h7.27V1057.5h-7.27zM1938.91 1014.7h7.27V1057.5h-7.27zM1946.82 1014.7h7.27V1057.5h-7.27zM1954.72 1014.7h7.27V1057.5h-7.27zM1962.62 1014.7h7.27V1057.5h-7.27zM1970.53 1014.7h7.27V1057.5h-7.27zM1978.43 1014.7h7.27V1057.5h-7.27zM1986.34 1014.7h7.27V1057.5h-7.27zM1994.25 1014.7h7.27V1057.5h-7.27zM2002.15 1014.7h7.27V1057.5h-7.27zM2010.06 1014.7h7.27V1057.5h-7.27zM2017.96 1014.7h7.27V1057.5h-7.27zM2025.87 1014.7h7.27V1057.5h-7.27zM2033.77 1014.7h7.27V1057.5h-7.27zM2041.67 1014.7h7.27V1057.5h-7.27zM2049.58 1014.7h7.27V1057.5h-7.27zM2057.49 1014.7h7.27V1057.5h-7.27zM2065.39 1014.7h7.27V1057.5h-7.27zM2073.30 1014.7h7.27V1057.5h-7.27zM2081.20 1014.7h7.27V1057.5h-7.27zM2089.11 1014.7h7.27V1057.5h-7.27zM2097.01 1014.7h7.27V1057.5h-7.27zM2104.91 1014.7h7.27V1057.5h-7.27zM2112.82 1014.7h7.27V1057.5h-7.27zM2120.73 1014.7h7.27V1057.5h-7.27zM2128.63 1014.7h7.27V1057.5h-7.27zM2136.53 1014.7h7.27V1057.5h-7.27zM2144.44 1014.7h7.27V1057.5h-7.27zM2152.35 1014.7h7.27V1057.5h-7.27zM2160.25 1014.7h7.27V1057.5h-7.27zM2168.15 1014.7h7.27V1057.5h-7.27zM2176.06 1014.7h7.27V1057.5h-7.27zM2183.97 1014.7h7.27V1057.5h-7.27zM2191.87 1014.7h7.27V1057.5h-7.27zM2199.78 1014.7h7.27V1057.5h-7.27zM2207.68 1014.7h7.27V1057.5h-7.27zM2215.59 1014.7h7.27V1057.5h-7.27zM2223.49 1014.7h7.27V1057.5h-7.27zM2231.39 1014.7h7.27V1057.5h-7.27zM2239.30 1014.7h7.27V1057.5h-7.27zM2247.20 1014.7h7.27V1057.5h-7.27zM2255.11 1014.7h7.27V1057.5h-7.27zM2263.01 1014.7h7.27V1057.5h-7.27zM2270.92 1014.7h7.27V1057.5h-7.27zM2278.83 1014.7h7.27V1057.5h-7.27zM2286.73 1014.7h7.27V1057.5h-7.27zM2294.64 1014.7h7.27V1057.5h-7.27zM2302.54 1014.7h7.27V1057.5h-7.27zM2310.45 1014.7h7.27V1057.5h-7.27zM2318.35 1014.7h7.27V1057.5h-7.27zM2326.26 1014.7h7.27V1057.5h-7.27zM2334.16 1014.7h7.27V1057.5h-7.27zM2342.07 1014.7h7.27V1057.5h-7.27zM2349.97 1014.7h7.27V1057.5h-7.27zM2357.88 1014.7h7.27V1057.5h-7.27zM2365.78 1014.7h7.27V1057.5h-7.27zM2373.68 1014.7h7.27V1057.5h-7.27zM2381.59 1014.7h7.27V1057.5h-7.27zM2389.49 1014.7h7.27V1057.5h-7.27zM2397.40 1014.7h7.27V1057.5h-7.27zM2405.31 1014.7h7.27V1057.5h-7.27zM2413.21 1014.7h7.27V1057.5h-7.27zM2421.12 1014.7h7.27V1057.5h-7.27zM2429.02 1014.7h7.27V1057.5h-7.27zM2436.93 1014.7h7.27V1057.5h-7.27zM2444.83 1014.7h7.27V1057.5h-7.27zM2452.74 1014.7h7.27V1057.5h-7.27zM2460.64 1014.7h7.27V1057.5h-7.27zM2468.55 1014.7h7.27V1057.5h-7.27zM2476.45 1014.7h7.27V1057.5h-7.27zM2484.36 1014.7h7.27V1057.5h-7.27zM2492.26 1014.7h7.27V1057.5h-7.27zM2500.16 1014.7h7.27V1057.5h-7.27zM2508.07 1014.7h7.27V1057.5h-7.27zM2515.97 1014.7h7.27V1057.5h-7.27zM2523.88 1014.7h7.27V1057.5h-7.27zM2531.78 1014.7h7.27V1057.5h-7.27zM2539.69 1014.7h7.27V1057.5h-7.27zM2547.60 1014.7h7.27V1057.5h-7.27zM2555.50 1014.7h7.27V1057.5h-7.27zM2563.41 1014.7h7.27V1057.5h-7.27zM2571.31 1014.7h7.27V1057.5h-7.27zM2579.22 1014.7h7.27V1057.5h-7.27zM2587.12 1014.7h7.27V1057.5h-7.27zM2595.03 1014.7h7.27V1057.5h-7.27zM2602.93 1014.7h7.27V1057.5h-7.27zM2610.84 1014.7h7.27V1057.5h-7.27zM2618.74 1014.7h7.27V1057.5h-7.27zM2626.64 1014.7h7.27V1057.5h-7.27zM2634.55 1014.7h7.27V1057.5h-7.27zM2642.45 1014.7h7.27V1057.5h-7.27zM2650.36 1014.7h7.27V1057.5h-7.27zM2658.26 1014.7h7.27V1057.5h-7.27zM2666.17 1014.7h7.27V1057.5h-7.27zM2674.08 1014.7h7.27V1057.5h-7.27zM2681.98 1014.7h7.27V1057.5h-7.27zM2689.89 1014.7h7.27V1057.5h-7.27zM2697.79 1014.7h7.27V1057.5h-7.27zM2705.70 1014.7h7.27V1057.5h-7.27zM2713.60 1014.7h7.27V1057.5h-7.27zM2721.51 1014.7h7.27V1057.5h-7.27zM2729.41 1014.7h7.27V1057.5h-7.27zM2737.32 1014.7h7.27V1057.5h-7.27zM2745.22 1014.7h7.27V1057.5h-7.27zM2753.12 1014.7h7.27V1057.5h-7.27zM2761.03 1014.7h7.27V1057.5h-7.27zM2768.93 1014.7h7.27V1057.5h-7.27zM2776.84 1014.7h7.27V1057.5h-7.27zM2784.74 1014.7h7.27V1057.5h-7.27zM2792.65 1014.7h7.27V1057.5h-7.27zM2800.56 1014.7h7.27V1057.5h-7.27zM2808.46 1014.7h7.27V1057.5h-7.27zM2816.37 1014.7h7.27V1057.5h-7.27zM2824.27 1014.7h7.27V1057.5h-7.27zM2832.18 1014.7h7.27V1057.5h-7.27z" fill="#fc9779"/>
<path d="M184.00 974.8h7.27V1014.7h-7.27zM191.91 974.8h7.27V1014.7h-7.27zM199.81 974.8h7.27V1014.7h-7.27zM207.72 974.8h7.27V1014.7h-7.27zM215.62 974.8h7.27V1014.7h-7.27zM223.53 974.8h7.27V1014.7h-7.27zM231.43 974.8h7.27V1014.7h-7.27zM239.34 974.8h7.27V1014.7h-7.27zM247.24 974.8h7.27V1014.7h-7.27zM255.14 974.8h7.27V1014.7h-7.27zM263.05 974.8h7.27V1014.7h-7.27zM270.95 974.8h7.27V1014.7h-7.27zM278.86 974.8h7.27V1014.7h-7.27zM286.76 974.8h7.27V1014.7h-7.27zM294.67 974.8h7.27V1014.7h-7.27zM302.57 974.8h7.27V1014.7h-7.27zM310.48 974.8h7.27V1014.7h-7.27zM318.38 974.8h7.27V1014.7h-7.27zM326.29 974.8h7.27V1014.7h-7.27zM334.19 974.8h7.27V1014.7h-7.27zM342.10 974.8h7.27V1014.7h-7.27zM350.00 974.8h7.27V1014.7h-7.27zM357.91 974.8h7.27V1014.7h-7.27zM365.81 974.8h7.27V1014.7h-7.27zM373.72 974.8h7.27V1014.7h-7.27zM381.62 974.8h7.27V1014.7h-7.27zM389.53 974.8h7.27V1014.7h-7.27zM397.44 974.8h7.27V1014.7h-7.27zM405.34 974.8h7.27V1014.7h-7.27zM413.25 974.8h7.27V1014.7h-7.27zM421.15 974.8h7.27V1014.7h-7.27zM429.06 974.8h7.27V1014.7h-7.27zM436.96 974.8h7.27V1014.7h-7.27zM444.87 974.8h7.27V1014.7h-7.27zM452.77 974.8h7.27V1014.7h-7.27zM460.68 974.8h7.27V1014.7h-7.27zM468.58 974.8h7.27V1014.7h-7.27zM476.49 974.8h7.27V1014.7h-7.27zM484.39 974.8h7.27V1014.7h-7.27zM492.30 974.8h7.27V1014.7h-7.27zM500.20 974.8h7.27V1014.7h-7.27zM508.11 974.8h7.27V1014.7h-7.27zM516.01 974.8h7.27V1014.7h-7.27zM523.91 974.8h7.27V1014.7h-7.27zM531.82 974.8h7.27V1014.7h-7.27zM539.73 974.8h7.27V1014.7h-7.27zM547.63 974.8h7.27V1014.7h-7.27zM555.54 974.8h7.27V1014.7h-7.27zM563.44 974.8h7.27V1014.7h-7.27zM571.35 974.8h7.27V1014.7h-7.27zM579.25 974.8h7.27V1014.7h-7.27zM587.15 974.8h7.27V1014.7h-7.27zM595.06 974.8h7.27V1014.7h-7.27zM602.97 974.8h7.27V1014.7h-7.27zM610.87 974.8h7.27V1014.7h-7.27zM618.78 974.8h7.27V1014.7h-7.27zM626.68 974.8h7.27V1014.7h-7.27zM634.59 974.8h7.27V1014.7h-7.27zM642.49 974.8h7.27V1014.7h-7.27zM650.39 974.8h7.27V1014.7h-7.27zM658.30 974.8h7.27V1014.7h-7.27zM666.21 974.8h7.27V1014.7h-7.27zM674.11 974.8h7.27V1014.7h-7.27zM682.02 974.8h7.27V1014.7h-7.27zM689.92 974.8h7.27V1014.7h-7.27zM697.83 974.8h7.27V1014.7h-7.27zM705.73 974.8h7.27V1014.7h-7.27zM713.63 974.8h7.27V1014.7h-7.27zM721.54 974.8h7.27V1014.7h-7.27zM729.45 974.8h7.27V1014.7h-7.27zM737.35 974.8h7.27V1014.7h-7.27zM745.25 974.8h7.27V1014.7h-7.27zM753.16 974.8h7.27V1014.7h-7.27zM761.07 974.8h7.27V1014.7h-7.27zM768.97 974.8h7.27V1014.7h-7.27zM776.88 974.8h7.27V1014.7h-7.27zM784.78 974.8h7.27V1014.7h-7.27zM792.69 974.8h7.27V1014.7h-7.27zM800.59 974.8h7.27V1014.7h-7.27zM808.50 974.8h7.27V1014.7h-7.27zM816.40 974.8h7.27V1014.7h-7.27zM824.31 974.8h7.27V1014.7h-7.27zM832.21 974.8h7.27V1014.7h-7.27zM840.12 974.8h7.27V1014.7h-7.27zM848.02 974.8h7.27V1014.7h-7.27zM855.93 974.8h7.27V1014.7h-7.27zM863.83 974.8h7.27V1014.7h-7.27zM871.74 974.8h7.27V1014.7h-7.27zM879.64 974.8h7.27V1014.7h-7.27zM887.55 974.8h7.27V1014.7h-7.27zM895.45 974.8h7.27V1014.7h-7.27zM903.36 974.8h7.27V1014.7h-7.27zM911.26 974.8h7.27V1014.7h-7.27zM919.17 974.8h7.27V1014.7h-7.27zM927.07 974.8h7.27V1014.7h-7.27zM934.98 974.8h7.27V1014.7h-7.27zM942.88 974.8h7.27V1014.7h-7.27zM950.78 974.8h7.27V1014.7h-7.27zM958.69 974.8h7.27V1014.7h-7.27zM966.60 974.8h7.27V1014.7h-7.27zM974.50 974.8h7.27V1014.7h-7.27zM982.40 974.8h7.27V1014.7h-7.27zM990.31 974.8h7.27V1014.7h-7.27zM998.22 974.8h7.27V1014.7h-7.27zM1006.12 974.8h7.27V1014.7h-7.27zM1014.02 974.8h7.27V1014.7h-7.27zM1021.93 974.8h7.27V1014.7h-7.27zM1029.84 974.8h7.27V1014.7h-7.27zM1037.74 974.8h7.27V1014.7h-7.27zM1045.64 974.8h7.27V1014.7h-7.27zM1053.55 974.8h7.27V1014.7h-7.27zM1061.45 974.8h7.27V1014.7h-7.27zM1069.36 974.8h7.27V1014.7h-7.27zM1077.26 974.8h7.27V1014.7h-7.27zM1085.17 974.8h7.27V1014.7h-7.27zM1093.08 974.8h7.27V1014.7h-7.27zM1100.98 974.8h7.27V1014.7h-7.27zM1108.88 974.8h7.27V1014.7h-7.27zM1116.79 974.8h7.27V1014.7h-7.27zM1124.70 974.8h7.27V1014.7h-7.27zM1140.51 974.8h7.27V1014.7h-7.27zM1148.41 974.8h7.27V1014.7h-7.27zM1156.32 974.8h7.27V1014.7h-7.27zM1164.22 974.8h7.27V1014.7h-7.27zM1172.12 974.8h7.27V1014.7h-7.27zM1180.03 974.8h7.27V1014.7h-7.27zM1187.93 974.8h7.27V1014.7h-7.27zM1195.84 974.8h7.27V1014.7h-7.27zM1203.74 974.8h7.27V1014.7h-7.27zM1211.65 974.8h7.27V1014.7h-7.27zM1219.56 974.8h7.27V1014.7h-7.27zM1227.46 974.8h7.27V1014.7h-7.27zM1235.37 974.8h7.27V1014.7h-7.27zM1243.27 974.8h7.27V1014.7h-7.27zM1251.17 974.8h7.27V1014.7h-7.27zM1259.08 974.8h7.27V1014.7h-7.27zM1266.99 974.8h7.27V1014.7h-7.27zM1274.89 974.8h7.27V1014.7h-7.27zM1282.80 974.8h7.27V1014.7h-7.27zM1290.70 974.8h7.27V1014.7h-7.27zM1298.61 974.8h7.27V1014.7h-7.27zM1306.51 974.8h7.27V1014.7h-7.27zM1314.41 974.8h7.27V1014.7h-7.27zM1322.32 974.8h7.27V1014.7h-7.27zM1330.23 974.8h7.27V1014.7h-7.27zM1338.13 974.8h7.27V1014.7h-7.27zM1346.04 974.8h7.27V1014.7h-7.27zM1353.94 974.8h7.27V1014.7h-7.27zM1361.85 974.8h7.27V1014.7h-7.27zM1369.75 974.8h7.27V1014.7h-7.27zM1377.65 974.8h7.27V1014.7h-7.27zM1385.56 974.8h7.27V1014.7h-7.27zM1393.47 974.8h7.27V1014.7h-7.27zM1401.37 974.8h7.27V1014.7h-7.27zM1409.28 974.8h7.27V1014.7h-7.27zM1417.18 974.8h7.27V1014.7h-7.27zM1425.09 974.8h7.27V1014.7h-7.27zM1432.99 974.8h7.27V1014.7h-7.27zM1440.89 974.8h7.27V1014.7h-7.27zM1448.80 974.8h7.27V1014.7h-7.27zM1456.70 974.8h7.27V1014.7h-7.27zM1464.61 974.8h7.27V1014.7h-7.27zM1472.52 974.8h7.27V1014.7h-7.27zM1480.42 974.8h7.27V1014.7h-7.27zM1488.33 974.8h7.27V1014.7h-7.27zM1496.23 974.8h7.27V1014.7h-7.27zM1504.13 974.8h7.27V1014.7h-7.27zM1512.04 974.8h7.27V1014.7h-7.27zM1519.94 974.8h7.27V1014.7h-7.27zM1527.85 974.8h7.27V1014.7h-7.27zM1535.76 974.8h7.27V1014.7h-7.27zM1543.66 974.8h7.27V1014.7h-7.27zM1551.57 974.8h7.27V1014.7h-7.27zM1559.47 974.8h7.27V1014.7h-7.27zM1567.38 974.8h7.27V1014.7h-7.27zM1575.28 974.8h7.27V1014.7h-7.27zM1583.18 974.8h7.27V1014.7h-7.27zM1591.09 974.8h7.27V1014.7h-7.27zM1599.00 974.8h7.27V1014.7h-7.27zM1606.90 974.8h7.27V1014.7h-7.27zM1614.81 974.8h7.27V1014.7h-7.27zM1622.71 974.8h7.27V1014.7h-7.27zM1630.62 974.8h7.27V1014.7h-7.27zM1638.52 974.8h7.27V1014.7h-7.27zM1646.42 974.8h7.27V1014.7h-7.27zM1654.33 974.8h7.27V1014.7h-7.27zM1662.24 974.8h7.27V1014.7h-7.27zM1670.14 974.8h7.27V1014.7h-7.27zM1678.05 974.8h7.27V1014.7h-7.27zM1685.95 974.8h7.27V1014.7h-7.27zM1693.86 974.8h7.27V1014.7h-7.27zM1701.76 974.8h7.27V1014.7h-7.27zM1709.66 974.8h7.27V1014.7h-7.27zM1717.57 974.8h7.27V1014.7h-7.27zM1725.48 974.8h7.27V1014.7h-7.27zM1733.38 974.8h7.27V1014.7h-7.27zM1741.29 974.8h7.27V1014.7h-7.27zM1749.19 974.8h7.27V1014.7h-7.27zM1757.10 974.8h7.27V1014.7h-7.27zM1765.00 974.8h7.27V1014.7h-7.27zM1772.90 974.8h7.27V1014.7h-7.27zM1780.81 974.8h7.27V1014.7h-7.27zM1788.72 974.8h7.27V1014.7h-7.27zM1796.62 974.8h7.27V1014.7h-7.27zM1804.53 974.8h7.27V1014.7h-7.27zM1812.43 974.8h7.27V1014.7h-7.27zM1820.34 974.8h7.27V1014.7h-7.27zM1828.24 974.8h7.27V1014.7h-7.27zM1836.14 974.8h7.27V1014.7h-7.27zM1844.05 974.8h7.27V1014.7h-7.27zM1851.96 974.8h7.27V1014.7h-7.27zM1859.86 974.8h7.27V1014.7h-7.27zM1867.77 974.8h7.27V1014.7h-7.27zM1875.67 974.8h7.27V1014.7h-7.27zM1883.58 974.8h7.27V1014.7h-7.27zM1891.48 974.8h7.27V1014.7h-7.27zM1899.38 974.8h7.27V1014.7h-7.27zM1907.29 974.8h7.27V1014.7h-7.27zM1915.20 974.8h7.27V1014.7h-7.27zM1923.10 974.8h7.27V1014.7h-7.27zM1931.01 974.8h7.27V1014.7h-7.27zM1938.91 974.8h7.27V1014.7h-7.27zM1946.82 974.8h7.27V1014.7h-7.27zM1954.72 974.8h7.27V1014.7h-7.27zM1962.62 974.8h7.27V1014.7h-7.27zM1970.53 974.8h7.27V1014.7h-7.27zM1978.43 974.8h7.27V1014.7h-7.27zM1986.34 974.8h7.27V1014.7h-7.27zM1994.25 974.8h7.27V1014.7h-7.27zM2002.15 974.8h7.27V1014.7h-7.27zM2010.06 974.8h7.27V1014.7h-7.27zM2017.96 974.8h7.27V1014.7h-7.27zM2025.87 974.8h7.27V1014.7h-7.27zM2033.77 974.8h7.27V1014.7h-7.27zM2041.67 974.8h7.27V1014.7h-7.27zM2049.58 974.8h7.27V1014.7h-7.27zM2057.49 974.8h7.27V1014.7h-7.27zM2065.39 974.8h7.27V1014.7h-7.27zM2073.30 974.8h7.27V1014.7h-7.27zM2081.20 974.8h7.27V1014.7h-7.27zM2089.11 974.8h7.27V1014.7h-7.27zM2097.01 974.8h7.27V1014.7h-7.27zM2104.91 974.8h7.27V1014.7h-7.27zM2112.82 974.8h7.27V1014.7h-7.27zM2120.73 974.8h7.27V1014.7h-7.27zM2128.63 974.8h7.27V1014.7h-7.27zM2136.53 974.8h7.27V1014.7h-7.27zM2144.44 974.8h7.27V1014.7h-7.27zM2152.35 974.8h7.27V1014.7h-7.27zM2160.25 974.8h7.27V1014.7h-7.27zM2168.15 974.8h7.27V1014.7h-7.27zM2176.06 974.8h7.27V1014.7h-7.27zM2183.97 974.8h7.27V1014.7h-7.27zM2191.87 974.8h7.27V1014.7h-7.27zM2199.78 974.8h7.27V1014.7h-7.27zM2207.68 974.8h7.27V1014.7h-7.27zM2215.59 974.8h7.27V1014.7h-7.27zM2223.49 974.8h7.27V1014.7h-7.27zM2231.39 974.8h7.27V1014.7h-7.27zM2239.30 974.8h7.27V1014.7h-7.27zM2247.20 974.8h7.27V1014.7h-7.27zM2255.11 974.8h7.27V1014.7h-7.27zM2263.01 974.8h7.27V1014.7h-7.27zM2270.92 974.8h7.27V1014.7h-7.27zM2278.83 974.8h7.27V1014.7h-7.27zM2286.73 974.8h7.27V1014.7h-7.27zM2294.64 974.8h7.27V1014.7h-7.27zM2302.54 974.8h7.27V1014.7h-7.27zM2310.45 974.8h7.27V1014.7h-7.27zM2318.35 974.8h7.27V1014.7h-7.27zM2326.26 974.8h7.27V1014.7h-7.27zM2334.16 974.8h7.27V1014.7h-7.27zM2342.07 974.8h7.27V1014.7h-7.27zM2349.97 974.8h7.27V1014.7h-7.27zM2357.88 974.8h7.27V1014.7h-7.27zM2365.78 974.8h7.27V1014.7h-7.27zM2373.68 974.8h7.27V1014.7h-7.27zM2381.59 974.8h7.27V1014.7h-7.27zM2389.49 974.8h7.27V1014.7h-7.27zM2397.40 974.8h7.27V1014.7h-7.27zM2405.31 974.8h7.27V1014.7h-7.27zM2413.21 974.8h7.27V1014.7h-7.27zM2421.12 974.8h7.27V1014.7h-7.27zM2429.02 974.8h7.27V1014.7h-7.27zM2436.93 974.8h7.27V1014.7h-7.27zM2444.83 974.8h7.27V1014.7h-7.27zM2452.74 974.8h7.27V1014.7h-7.27zM2460.64 974.8h7.27V1014.7h-7.27zM2468.55 974.8h7.27V1014.7h-7.27zM2476.45 974.8h7.27V1014.7h-7.27zM2484.36 974.8h7.27V1014.7h-7.27zM2492.26 974.8h7.27V1014.7h-7.27zM2500.16 974.8h7.27V1014.7h-7.27zM2508.07 974.8h7.27V1014.7h-7.27zM2515.97 974.8h7.27V1014.7h-7.27zM2523.88 974.8h7.27V1014.7h-7.27zM2531.78 974.8h7.27V1014.7h-7.27zM2539.69 974.8h7.27V1014.7h-7.27zM2547.60 974.8h7.27V1014.7h-7.27zM2555.50 974.8h7.27V1014.7h-7.27zM2563.41 974.8h7.27V1014.7h-7.27zM2571.31 974.8h7.27V1014.7h-7.27zM2579.22 974.8h7.27V1014.7h-7.27zM2587.12 974.8h7.27V1014.7h-7.27zM2595.03 974.8h7.27V1014.7h-7.27zM2602.93 974.8h7.27V1014.7h-7.27zM2610.84 974.8h7.27V1014.7h-7.27zM2618.74 974.8h7.27V1014.7h-7.27zM2626.64 974.8h7.27V1014.7h-7.27zM2634.55 974.8h7.27V1014.7h-7.27zM2642.45 974.8h7.27V1014.7h-7.27zM2650.36 974.8h7.27V1014.7h-7.27zM2658.26 974.8h7.27V1014.7h-7.27zM2666.17 974.8h7.27V1014.7h-7.27zM2674.08 974.8h7.27V1014.7h-7.27zM2681.98 974.8h7.27V1014.7h-7.27zM2689.89 974.8h7.27V1014.7h-7.27zM2697.79 974.8h7.27V1014.7h-7.27zM2705.70 974.8h7.27V1014.7h-7.27zM2713.60 974.8h7.27V1014.7h-7.27zM2721.51 974.8h7.27V1014.7h-7.27zM2729.41 974.8h7.27V1014.7h-7.27zM2737.32 974.8h7.27V1014.7h-7.27zM2745.22 974.8h7.27V1014.7h-7.27zM2753.12 974.8h7.27V1014.7h-7.27zM2761.03 974.8h7.27V1014.7h-7.27zM2768.93 974.8h7.27V1014.7h-7.27zM2776.84 974.8h7.27V1014.7h-7.27zM2784.74 974.8h7.27V1014.7h-7.27zM2792.65 974.8h7.27V1014.7h-7.27zM2800.56 974.8h7.27V1014.7h-7.27zM2808.46 974.8h7.27V1014.7h-7.27zM2816.37 974.8h7.27V1014.7h-7.27zM2824.27 974.8h7.27V1014.7h-7.27zM2832.18 974.8h7.27V1014.7h-7.27z" fill="#fcd34f"/>
<path d="M184.00 865.8h7.27V974.8h-7.27zM191.91 877.0h7.27V974.8h-7.27zM199.81 879.0h7.27V974.8h-7.27zM207.72 822.1h7.27V974.8h-7.27zM215.62 879.0h7.27V974.8h-7.27zM223.53 880.7h7.27V974.8h-7.27zM231.43 846.5h7.27V974.8h-7.27zM239.34 879.0h7.27V974.8h-7.27zM247.24 881.1h7.27V974.8h-7.27zM255.14 892.6h7.27V974.8h-7.27zM263.05 859.7h7.27V974.8h-7.27zM270.95 850.0h7.27V974.8h-7.27zM278.86 839.0h7.27V974.8h-7.27zM286.76 879.0h7.27V974.8h-7.27zM294.67 852.6h7.27V974.8h-7.27zM302.57 866.8h7.27V974.8h-7.27zM310.48 846.5h7.27V974.8h-7.27zM318.38 846.1h7.27V974.8h-7.27zM326.29 847.1h7.27V974.8h-7.27zM334.19 852.6h7.27V974.8h-7.27zM342.10 824.1h7.27V974.8h-7.27zM350.00 858.3h7.27V974.8h-7.27zM357.91 822.5h7.27V974.8h-7.27zM365.81 826.6h7.27V974.8h-7.27zM373.72 886.7h7.27V974.8h-7.27zM381.62 846.9h7.27V974.8h-7.27zM389.53 869.3h7.27V974.8h-7.27zM397.44 838.4h7.27V974.8h-7.27zM405.34 869.3h7.27V974.8h-7.27zM413.25 871.9h7.27V974.8h-7.27zM421.15 885.1h7.27V974.8h-7.27zM429.06 854.2h7.27V974.8h-7.27zM436.96 885.1h7.27V974.8h-7.27zM444.87 885.1h7.27V974.8h-7.27zM452.77 869.9h7.27V974.8h-7.27zM460.68 854.2h7.27V974.8h-7.27zM468.58 834.3h7.27V974.8h-7.27zM476.49 878.0h7.27V974.8h-7.27zM484.39 862.2h7.27V974.8h-7.27zM492.30 878.0h7.27V974.8h-7.27zM500.20 858.1h7.27V974.8h-7.27zM508.11 862.2h7.27V974.8h-7.27zM516.01 869.3h7.27V974.8h-7.27zM523.91 873.9h7.27V974.8h-7.27zM531.82 856.1h7.27V974.8h-7.27zM539.73 884.1h7.27V974.8h-7.27zM547.63 856.3h7.27V974.8h-7.27zM555.54 888.8h7.27V974.8h-7.27zM563.44 890.2h7.27V974.8h-7.27zM571.35 882.7h7.27V974.8h-7.27zM579.25 878.0h7.27V974.8h-7.27zM587.15 846.9h7.27V974.8h-7.27zM595.06 869.3h7.27V974.8h-7.27zM602.97 868.3h7.27V974.8h-7.27zM610.87 843.0h7.27V974.8h-7.27zM618.78 871.9h7.27V974.8h-7.27zM626.68 941.0h7.27V974.8h-7.27zM634.59 833.9h7.27V974.8h-7.27zM642.49 850.0h7.27V974.8h-7.27zM650.39 846.5h7.27V974.8h-7.27zM658.30 876.6h7.27V974.8h-7.27zM666.21 862.4h7.27V974.8h-7.27zM674.11 892.2h7.27V974.8h-7.27zM682.02 877.0h7.27V974.8h-7.27zM689.92 887.6h7.27V974.8h-7.27zM697.83 895.7h7.27V974.8h-7.27zM705.73 905.9h7.27V974.8h-7.27zM713.63 905.9h7.27V974.8h-7.27zM721.54 842.8h7.27V974.8h-7.27zM729.45 921.1h7.27V974.8h-7.27zM737.35 892.2h7.27V974.8h-7.27zM745.25 857.1h7.27V974.8h-7.27zM753.16 884.5h7.27V974.8h-7.27zM761.07 900.4h7.27V974.8h-7.27zM768.97 890.2h7.27V974.8h-7.27zM776.88 884.1h7.27V974.8h-7.27zM784.78 892.2h7.27V974.8h-7.27zM792.69 913.6h7.27V974.8h-7.27zM800.59 880.4h7.27V974.8h-7.27zM808.50 918.0h7.27V974.8h-7.27zM816.40 909.9h7.27V974.8h-7.27zM824.31 918.0h7.27V974.8h-7.27zM832.21 908.5h7.27V974.8h-7.27zM840.12 880.4h7.27V974.8h-7.27zM848.02 903.0h7.27V974.8h-7.27zM855.93 886.1h7.27V974.8h-7.27zM863.83 908.9h7.27V974.8h-7.27zM871.74 909.1h7.27V974.8h-7.27zM879.64 892.6h7.27V974.8h-7.27zM887.55 918.0h7.27V974.8h-7.27zM895.45 929.2h7.27V974.8h-7.27zM903.36 919.7h7.27V974.8h-7.27zM911.26 919.3h7.27V974.8h-7.27zM919.17 891.2h7.27V974.8h-7.27zM927.07 919.3h7.27V974.8h-7.27zM934.98 929.8h7.27V974.8h-7.27zM942.88 908.1h7.27V974.8h-7.27zM950.78 929.8h7.27V974.8h-7.27zM958.69 921.1h7.27V974.8h-7.27zM966.60 909.1h7.27V974.8h-7.27zM974.50 919.7h7.27V974.8h-7.27zM982.40 903.0h7.27V974.8h-7.27zM990.31 908.1h7.27V974.8h-7.27zM998.22 886.1h7.27V974.8h-7.27zM1006.12 901.4h7.27V974.8h-7.27zM1014.02 919.1h7.27V974.8h-7.27zM1021.93 919.7h7.27V974.8h-7.27zM1029.84 857.1h7.27V974.8h-7.27zM1037.74 873.3h7.27V974.8h-7.27zM1045.64 915.6h7.27V974.8h-7.27zM1053.55 915.6h7.27V974.8h-7.27zM1061.45 890.2h7.27V974.8h-7.27zM1069.36 890.2h7.27V974.8h-7.27zM1077.26 915.6h7.27V974.8h-7.27zM1085.17 914.6h7.27V974.8h-7.27zM1093.08 946.1h7.27V974.8h-7.27zM1100.98 935.9h7.27V974.8h-7.27zM1108.88 916.6h7.27V974.8h-7.27zM1116.79 894.3h7.27V974.8h-7.27zM1124.70 907.1h7.27V974.8h-7.27zM1140.51 914.6h7.27V974.8h-7.27zM1148.41 889.2h7.27V974.8h-7.27zM1156.32 881.0h7.27V974.8h-7.27zM1164.22 902.3h7.27V974.8h-7.27zM1172.12 894.8h7.27V974.8h-7.27zM1180.03 863.8h7.27V974.8h-7.27zM1187.93 862.4h7.27V974.8h-7.27zM1195.84 864.5h7.27V974.8h-7.27zM1203.74 887.6h7.27V974.8h-7.27zM1211.65 868.0h7.27V974.8h-7.27zM1219.56 900.8h7.27V974.8h-7.27zM1227.46 897.5h7.27V974.8h-7.27zM1235.37 923.5h7.27V974.8h-7.27zM1243.27 915.8h7.27V974.8h-7.27zM1251.17 869.4h7.27V974.8h-7.27zM1259.08 880.1h7.27V974.8h-7.27zM1266.99 871.7h7.27V974.8h-7.27zM1274.89 901.5h7.27V974.8h-7.27zM1282.80 895.6h7.27V974.8h-7.27zM1290.70 863.9h7.27V974.8h-7.27zM1298.61 904.2h7.27V974.8h-7.27zM1306.51 880.4h7.27V974.8h-7.27zM1314.41 889.5h7.27V974.8h-7.27zM1322.32 911.6h7.27V974.8h-7.27zM1330.23 875.9h7.27V974.8h-7.27zM1338.13 894.1h7.27V974.8h-7.27zM1346.04 907.4h7.27V974.8h-7.27zM1353.94 923.7h7.27V974.8h-7.27zM1361.85 887.2h7.27V974.8h-7.27zM1369.75 869.9h7.27V974.8h-7.27zM1377.65 862.5h7.27V974.8h-7.27zM1385.56 909.7h7.27V974.8h-7.27zM1393.47 916.9h7.27V974.8h-7.27zM1401.37 905.2h7.27V974.8h-7.27zM1409.28 897.7h7.27V974.8h-7.27zM1417.18 914.6h7.27V974.8h-7.27zM1425.09 890.8h7.27V974.8h-7.27zM1432.99 863.9h7.27V974.8h-7.27zM1440.89 902.1h7.27V974.8h-7.27zM1448.80 913.4h7.27V974.8h-7.27zM1456.70 885.1h7.27V974.8h-7.27zM1464.61 861.5h7.27V974.8h-7.27zM1472.52 870.9h7.27V974.8h-7.27zM1480.42 863.8h7.27V974.8h-7.27zM1488.33 868.4h7.27V974.8h-7.27zM1496.23 885.4h7.27V974.8h-7.27zM1504.13 865.2h7.27V974.8h-7.27zM1512.04 895.7h7.27V974.8h-7.27zM1519.94 913.3h7.27V974.8h-7.27zM1527.85 878.1h7.27V974.8h-7.27zM1535.76 883.3h7.27V974.8h-7.27zM1543.66 922.3h7.27V974.8h-7.27zM1551.57 871.5h7.27V974.8h-7.27zM1559.47 875.2h7.27V974.8h-7.27zM1567.38 898.3h7.27V974.8h-7.27zM1575.28 860.3h7.27V974.8h-7.27zM1583.18 884.0h7.27V974.8h-7.27zM1591.09 922.0h7.27V974.8h-7.27zM1599.00 893.5h7.27V974.8h-7.27zM1606.90 904.0h7.27V974.8h-7.27zM1614.81 918.5h7.27V974.8h-7.27zM1622.71 916.8h7.27V974.8h-7.27zM1630.62 885.5h7.27V974.8h-7.27zM1638.52 866.7h7.27V974.8h-7.27zM1646.42 864.0h7.27V974.8h-7.27zM1654.33 873.6h7.27V974.8h-7.27zM1662.24 882.1h7.27V974.8h-7.27zM1670.14 860.0h7.27V974.8h-7.27zM1678.05 866.6h7.27V974.8h-7.27zM1685.95 861.7h7.27V974.8h-7.27zM1693.86 899.9h7.27V974.8h-7.27zM1701.76 876.4h7.27V974.8h-7.27zM1709.66 883.7h7.27V974.8h-7.27zM1717.57 915.2h7.27V974.8h-7.27zM1725.48 890.3h7.27V974.8h-7.27zM1733.38 865.6h7.27V974.8h-7.27zM1741.29 882.3h7.27V974.8h-7.27zM1749.19 913.9h7.27V974.8h-7.27zM1757.10 861.5h7.27V974.8h-7.27zM1765.00 894.3h7.27V974.8h-7.27zM1772.90 895.3h7.27V974.8h-7.27zM1780.81 894.3h7.27V974.8h-7.27zM1788.72 916.1h7.27V974.8h-7.27zM1796.62 877.0h7.27V974.8h-7.27zM1804.53 870.9h7.27V974.8h-7.27zM1812.43 894.6h7.27V974.8h-7.27zM1820.34 881.4h7.27V974.8h-7.27zM1828.24 912.7h7.27V974.8h-7.27zM1836.14 915.4h7.27V974.8h-7.27zM1844.05 913.2h7.27V974.8h-7.27zM1851.96 874.7h7.27V974.8h-7.27zM1859.86 891.2h7.27V974.8h-7.27zM1867.77 871.9h7.27V974.8h-7.27zM1875.67 891.8h7.27V974.8h-7.27zM1883.58 875.0h7.27V974.8h-7.27zM1891.48 871.9h7.27V974.8h-7.27zM1899.38 878.0h7.27V974.8h-7.27zM1907.29 876.0h7.27V974.8h-7.27zM1915.20 850.0h7.27V974.8h-7.27zM1923.10 895.7h7.27V974.8h-7.27zM1931.01 883.5h7.27V974.8h-7.27zM1938.91 882.7h7.27V974.8h-7.27zM1946.82 871.9h7.27V974.8h-7.27zM1954.72 875.0h7.27V974.8h-7.27zM1962.62 850.0h7.27V974.8h-7.27zM1970.53 882.7h7.27V974.8h-7.27zM1978.43 882.7h7.27V974.8h-7.27zM1986.34 890.2h7.27V974.8h-7.27zM1994.25 846.5h7.27V974.8h-7.27zM2002.15 879.0h7.27V974.8h-7.27zM2010.06 907.1h7.27V974.8h-7.27zM2017.96 884.1h7.27V974.8h-7.27zM2025.87 884.1h7.27V974.8h-7.27zM2033.77 851.2h7.27V974.8h-7.27zM2041.67 887.8h7.27V974.8h-7.27zM2049.58 905.4h7.27V974.8h-7.27zM2057.49 893.9h7.27V974.8h-7.27zM2065.39 884.1h7.27V974.8h-7.27zM2073.30 845.9h7.27V974.8h-7.27zM2081.20 851.0h7.27V974.8h-7.27zM2089.11 884.7h7.27V974.8h-7.27zM2097.01 869.9h7.27V974.8h-7.27zM2104.91 859.7h7.27V974.8h-7.27zM2112.82 884.7h7.27V974.8h-7.27zM2120.73 875.0h7.27V974.8h-7.27zM2128.63 888.2h7.27V974.8h-7.27zM2136.53 906.9h7.27V974.8h-7.27zM2144.44 871.9h7.27V974.8h-7.27zM2152.35 872.9h7.27V974.8h-7.27zM2160.25 896.3h7.27V974.8h-7.27zM2168.15 887.6h7.27V974.8h-7.27zM2176.06 852.2h7.27V974.8h-7.27zM2183.97 887.6h7.27V974.8h-7.27zM2191.87 863.2h7.27V974.8h-7.27zM2199.78 896.3h7.27V974.8h-7.27zM2207.68 861.7h7.27V974.8h-7.27zM2215.59 896.3h7.27V974.8h-7.27zM2223.49 896.3h7.27V974.8h-7.27zM2231.39 844.5h7.27V974.8h-7.27zM2239.30 858.7h7.27V974.8h-7.27zM2247.20 880.0h7.27V974.8h-7.27zM2255.11 913.6h7.27V974.8h-7.27zM2263.01 862.4h7.27V974.8h-7.27zM2270.92 889.2h7.27V974.8h-7.27zM2278.83 913.6h7.27V974.8h-7.27zM2286.73 918.0h7.27V974.8h-7.27zM2294.64 915.6h7.27V974.8h-7.27zM2302.54 912.2h7.27V974.8h-7.27zM2310.45 932.9h7.27V974.8h-7.27zM2318.35 914.0h7.27V974.8h-7.27zM2326.26 896.3h7.27V974.8h-7.27zM2334.16 879.0h7.27V974.8h-7.27zM2342.07 912.6h7.27V974.8h-7.27zM2349.97 887.6h7.27V974.8h-7.27zM2357.88 891.2h7.27V974.8h-7.27zM2365.78 876.0h7.27V974.8h-7.27zM2373.68 865.8h7.27V974.8h-7.27zM2381.59 896.3h7.27V974.8h-7.27zM2389.49 852.0h7.27V974.8h-7.27zM2397.40 846.9h7.27V974.8h-7.27zM2405.31 883.7h7.27V974.8h-7.27zM2413.21 835.7h7.27V974.8h-7.27zM2421.12 886.1h7.27V974.8h-7.27zM2429.02 830.2h7.27V974.8h-7.27zM2436.93 875.0h7.27V974.8h-7.27zM2444.83 875.0h7.27V974.8h-7.27zM2452.74 845.9h7.27V974.8h-7.27zM2460.64 903.0h7.27V974.8h-7.27zM2468.55 895.3h7.27V974.8h-7.27zM2476.45 868.3h7.27V974.8h-7.27zM2484.36 824.8h7.27V974.8h-7.27zM2492.26 869.3h7.27V974.8h-7.27zM2500.16 863.8h7.27V974.8h-7.27zM2508.07 844.9h7.27V974.8h-7.27zM2515.97 865.2h7.27V974.8h-7.27zM2523.88 844.9h7.27V974.8h-7.27zM2531.78 851.2h7.27V974.8h-7.27zM2539.69 851.2h7.27V974.8h-7.27zM2547.60 864.2h7.27V974.8h-7.27zM2555.50 864.2h7.27V974.8h-7.27zM2563.41 860.3h7.27V974.8h-7.27zM2571.31 907.9h7.27V974.8h-7.27zM2579.22 858.1h7.27V974.8h-7.27zM2587.12 868.5h7.27V974.8h-7.27zM2595.03 868.9h7.27V974.8h-7.27zM2602.93 841.0h7.27V974.8h-7.27zM2610.84 894.3h7.27V974.8h-7.27zM2618.74 910.5h7.27V974.8h-7.27zM2626.64 866.2h7.27V974.8h-7.27zM2634.55 892.2h7.27V974.8h-7.27zM2642.45 892.2h7.27V974.8h-7.27zM2650.36 876.0h7.27V974.8h-7.27zM2658.26 896.3h7.27V974.8h-7.27zM2666.17 843.9h7.27V974.8h-7.27zM2674.08 879.0h7.27V974.8h-7.27zM2681.98 886.7h7.27V974.8h-7.27zM2689.89 862.4h7.27V974.8h-7.27zM2697.79 862.8h7.27V974.8h-7.27zM2705.70 895.9h7.27V974.8h-7.27zM2713.60 846.1h7.27V974.8h-7.27zM2721.51 879.0h7.27V974.8h-7.27zM2729.41 860.3h7.27V974.8h-7.27zM2737.32 876.0h7.27V974.8h-7.27zM2745.22 881.1h7.27V974.8h-7.27zM2753.12 862.4h7.27V974.8h-7.27zM2761.03 901.4h7.27V974.8h-7.27zM2768.93 885.7h7.27V974.8h-7.27zM2776.84 906.5h7.27V974.8h-7.27zM2784.74 869.9h7.27V974.8h-7.27zM2792.65 897.7h7.27V974.8h-7.27zM2800.56 907.9h7.27V974.8h-7.27zM2808.46 904.0h7.27V974.8h-7.27zM2816.37 927.8h7.27V974.8h-7.27zM2824.27 921.7h7.27V974.8h-7.27zM2832.18 909.5h7.27V974.8h-7.27z" fill="#0e9488"/>
<path d="M184.00 844.1h7.27V865.8h-7.27zM191.91 812.0h7.27V877.0h-7.27zM199.81 795.7h7.27V879.0h-7.27zM207.72 792.6h7.27V822.1h-7.27zM215.62 848.5h7.27V879.0h-7.27zM223.53 858.1h7.27V880.7h-7.27zM231.43 824.6h7.27V846.5h-7.27zM239.34 831.7h7.27V879.0h-7.27zM247.24 849.6h7.27V881.1h-7.27zM255.14 845.5h7.27V892.6h-7.27zM263.05 809.5h7.27V859.7h-7.27zM270.95 823.1h7.27V850.0h-7.27zM278.86 818.0h7.27V839.0h-7.27zM286.76 852.2h7.27V879.0h-7.27zM294.67 829.8h7.27V852.6h-7.27zM302.57 847.1h7.27V866.8h-7.27zM310.48 832.3h7.27V846.5h-7.27zM318.38 815.0h7.27V846.1h-7.27zM326.29 809.9h7.27V847.1h-7.27zM334.19 843.0h7.27V852.6h-7.27zM342.10 786.1h7.27V824.1h-7.27zM350.00 821.1h7.27V858.3h-7.27zM357.91 805.9h7.27V822.5h-7.27zM365.81 781.9h7.27V826.6h-7.27zM373.72 829.8h7.27V886.7h-7.27zM381.62 815.6h7.27V846.9h-7.27zM389.53 804.4h7.27V869.3h-7.27zM397.44 825.2h7.27V838.4h-7.27zM405.34 817.0h7.27V869.3h-7.27zM413.25 863.2h7.27V871.9h-7.27zM421.15 827.2h7.27V885.1h-7.27zM429.06 819.5h7.27V854.2h-7.27zM436.96 827.2h7.27V885.1h-7.27zM444.87 827.2h7.27V885.1h-7.27zM452.77 840.4h7.27V869.9h-7.27zM460.68 823.1h7.27V854.2h-7.27zM468.58 820.5h7.27V834.3h-7.27zM476.49 842.8h7.27V878.0h-7.27zM484.39 827.2h7.27V862.2h-7.27zM492.30 842.8h7.27V878.0h-7.27zM500.20 823.1h7.27V858.1h-7.27zM508.11 844.9h7.27V862.2h-7.27zM516.01 805.2h7.27V869.3h-7.27zM523.91 856.3h7.27V873.9h-7.27zM531.82 824.8h7.27V856.1h-7.27zM539.73 856.7h7.27V884.1h-7.27zM547.63 821.7h7.27V856.3h-7.27zM555.54 847.9h7.27V888.8h-7.27zM563.44 832.3h7.27V890.2h-7.27zM571.35 815.6h7.27V882.7h-7.27zM579.25 837.8h7.27V878.0h-7.27zM587.15 800.8h7.27V846.9h-7.27zM595.06 799.8h7.27V869.3h-7.27zM602.97 812.0h7.27V868.3h-7.27zM610.87 799.1h7.27V843.0h-7.27zM618.78 842.8h7.27V871.9h-7.27zM626.68 895.3h7.27V941.0h-7.27zM634.59 800.8h7.27V833.9h-7.27zM642.49 832.3h7.27V850.0h-7.27zM650.39 792.0h7.27V846.5h-7.27zM658.30 828.8h7.27V876.6h-7.27zM666.21 803.4h7.27V862.4h-7.27zM674.11 822.1h7.27V892.2h-7.27zM682.02 846.1h7.27V877.0h-7.27zM689.92 824.1h7.27V887.6h-7.27zM697.83 814.4h7.27V895.7h-7.27zM705.73 858.3h7.27V905.9h-7.27zM713.63 855.7h7.27V905.9h-7.27zM721.54 817.4h7.27V842.8h-7.27zM729.45 865.8h7.27V921.1h-7.27zM737.35 865.4h7.27V892.2h-7.27zM745.25 802.4h7.27V857.1h-7.27zM753.16 828.8h7.27V884.5h-7.27zM761.07 859.7h7.27V900.4h-7.27zM768.97 848.9h7.27V890.2h-7.27zM776.88 841.0h7.27V884.1h-7.27zM784.78 860.3h7.27V892.2h-7.27zM792.69 855.2h7.27V913.6h-7.27zM800.59 859.3h7.27V880.4h-7.27zM808.50 877.4h7.27V918.0h-7.27zM816.40 868.9h7.27V909.9h-7.27zM824.31 877.4h7.27V918.0h-7.27zM832.21 825.8h7.27V908.5h-7.27zM840.12 852.6h7.27V880.4h-7.27zM848.02 809.3h7.27V903.0h-7.27zM855.93 760.1h7.27V886.1h-7.27zM863.83 866.8h7.27V908.9h-7.27zM871.74 849.1h7.27V909.1h-7.27zM879.64 867.2h7.27V892.6h-7.27zM887.55 863.8h7.27V918.0h-7.27zM895.45 887.2h7.27V929.2h-7.27zM903.36 841.4h7.27V919.7h-7.27zM911.26 830.2h7.27V919.3h-7.27zM919.17 844.9h7.27V891.2h-7.27zM927.07 830.2h7.27V919.3h-7.27zM934.98 902.0h7.27V929.8h-7.27zM942.88 833.3h7.27V908.1h-7.27zM950.78 843.5h7.27V929.8h-7.27zM958.69 869.3h7.27V921.1h-7.27zM966.60 855.2h7.27V909.1h-7.27zM974.50 899.3h7.27V919.7h-7.27zM982.40 828.2h7.27V903.0h-7.27zM990.31 862.4h7.27V908.1h-7.27zM998.22 858.3h7.27V886.1h-7.27zM1006.12 845.5h7.27V901.4h-7.27zM1014.02 856.1h7.27V919.1h-7.27zM1021.93 879.6h7.27V919.7h-7.27zM1029.84 840.0h7.27V857.1h-7.27zM1037.74 833.3h7.27V873.3h-7.27zM1045.64 844.9h7.27V915.6h-7.27zM1053.55 869.3h7.27V915.6h-7.27zM1061.45 846.1h7.27V890.2h-7.27zM1069.36 846.1h7.27V890.2h-7.27zM1077.26 879.0h7.27V915.6h-7.27zM1085.17 886.7h7.27V914.6h-7.27zM1093.08 913.2h7.27V946.1h-7.27zM1100.98 888.2h7.27V935.9h-7.27zM1108.88 852.2h7.27V916.6h-7.27zM1116.79 835.3h7.27V894.3h-7.27zM1124.70 856.3h7.27V907.1h-7.27zM1140.51 865.8h7.27V914.6h-7.27zM1148.41 818.0h7.27V889.2h-7.27zM1156.32 848.5h7.27V881.0h-7.27zM1164.22 873.7h7.27V902.3h-7.27zM1172.12 851.5h7.27V894.8h-7.27zM1180.03 813.4h7.27V863.8h-7.27zM1187.93 815.8h7.27V862.4h-7.27zM1195.84 835.0h7.27V864.5h-7.27zM1203.74 821.3h7.27V887.6h-7.27zM1211.65 831.9h7.27V868.0h-7.27zM1219.56 828.4h7.27V900.8h-7.27zM1227.46 852.7h7.27V897.5h-7.27zM1235.37 896.1h7.27V923.5h-7.27zM1243.27 876.3h7.27V915.8h-7.27zM1251.17 838.5h7.27V869.4h-7.27zM1259.08 814.2h7.27V880.1h-7.27zM1266.99 817.7h7.27V871.7h-7.27zM1274.89 857.9h7.27V901.5h-7.27zM1282.80 867.5h7.27V895.6h-7.27zM1290.70 828.6h7.27V863.9h-7.27zM1298.61 857.8h7.27V904.2h-7.27zM1306.51 826.1h7.27V880.4h-7.27zM1314.41 849.5h7.27V889.5h-7.27zM1322.32 851.7h7.27V911.6h-7.27zM1330.23 822.1h7.27V875.9h-7.27zM1338.13 825.4h7.27V894.1h-7.27zM1346.04 868.0h7.27V907.4h-7.27zM1353.94 892.8h7.27V923.7h-7.27zM1361.85 824.3h7.27V887.2h-7.27zM1369.75 820.4h7.27V869.9h-7.27zM1377.65 804.1h7.27V862.5h-7.27zM1385.56 856.0h7.27V909.7h-7.27zM1393.47 876.2h7.27V916.9h-7.27zM1401.37 850.5h7.27V905.2h-7.27zM1409.28 849.9h7.27V897.7h-7.27zM1417.18 842.4h7.27V914.6h-7.27zM1425.09 832.6h7.27V890.8h-7.27zM1432.99 803.9h7.27V863.9h-7.27zM1440.89 827.4h7.27V902.1h-7.27zM1448.80 874.2h7.27V913.4h-7.27zM1456.70 826.6h7.27V885.1h-7.27zM1464.61 813.4h7.27V861.5h-7.27zM1472.52 840.1h7.27V870.9h-7.27zM1480.42 800.4h7.27V863.8h-7.27zM1488.33 831.0h7.27V868.4h-7.27zM1496.23 816.8h7.27V885.4h-7.27zM1504.13 817.8h7.27V865.2h-7.27zM1512.04 826.5h7.27V895.7h-7.27zM1519.94 845.1h7.27V913.3h-7.27zM1527.85 832.3h7.27V878.1h-7.27zM1535.76 814.1h7.27V883.3h-7.27zM1543.66 889.7h7.27V922.3h-7.27zM1551.57 834.9h7.27V871.5h-7.27zM1559.47 825.9h7.27V875.2h-7.27zM1567.38 860.2h7.27V898.3h-7.27zM1575.28 814.3h7.27V860.3h-7.27zM1583.18 830.7h7.27V884.0h-7.27zM1591.09 862.4h7.27V922.0h-7.27zM1599.00 837.6h7.27V893.5h-7.27zM1606.90 876.3h7.27V904.0h-7.27zM1614.81 854.5h7.27V918.5h-7.27zM1622.71 851.9h7.27V916.8h-7.27zM1630.62 840.6h7.27V885.5h-7.27zM1638.52 810.0h7.27V866.7h-7.27zM1646.42 835.7h7.27V864.0h-7.27zM1654.33 840.5h7.27V873.6h-7.27zM1662.24 854.5h7.27V882.1h-7.27zM1670.14 827.5h7.27V860.0h-7.27zM1678.05 823.4h7.27V866.6h-7.27zM1685.95 792.9h7.27V861.7h-7.27zM1693.86 867.5h7.27V899.9h-7.27zM1701.76 834.0h7.27V876.4h-7.27zM1709.66 852.5h7.27V883.7h-7.27zM1717.57 840.5h7.27V915.2h-7.27zM1725.48 841.1h7.27V890.3h-7.27zM1733.38 835.5h7.27V865.6h-7.27zM1741.29 844.0h7.27V882.3h-7.27zM1749.19 880.8h7.27V913.9h-7.27zM1757.10 789.0h7.27V861.5h-7.27zM1765.00 862.0h7.27V894.3h-7.27zM1772.90 869.0h7.27V895.3h-7.27zM1780.81 820.4h7.27V894.3h-7.27zM1788.72 856.3h7.27V916.1h-7.27zM1796.62 833.6h7.27V877.0h-7.27zM1804.53 807.3h7.27V870.9h-7.27zM1812.43 830.7h7.27V894.6h-7.27zM1820.34 845.3h7.27V881.4h-7.27zM1828.24 838.5h7.27V912.7h-7.27zM1836.14 850.1h7.27V915.4h-7.27zM1844.05 851.2h7.27V913.2h-7.27zM1851.96 823.9h7.27V874.7h-7.27zM1859.86 830.9h7.27V891.2h-7.27zM1867.77 835.9h7.27V871.9h-7.27zM1875.67 853.0h7.27V891.8h-7.27zM1883.58 814.6h7.27V875.0h-7.27zM1891.48 842.4h7.27V871.9h-7.27zM1899.38 829.8h7.27V878.0h-7.27zM1907.29 830.2h7.27V876.0h-7.27zM1915.20 835.9h7.27V850.0h-7.27zM1923.10 873.5h7.27V895.7h-7.27zM1931.01 846.1h7.27V883.5h-7.27zM1938.91 834.9h7.27V882.7h-7.27zM1946.82 840.4h7.27V871.9h-7.27zM1954.72 835.9h7.27V875.0h-7.27zM1962.62 787.2h7.27V850.0h-7.27zM1970.53 856.3h7.27V882.7h-7.27zM1978.43 843.5h7.27V882.7h-7.27zM1986.34 855.0h7.27V890.2h-7.27zM1994.25 830.7h7.27V846.5h-7.27zM2002.15 850.2h7.27V879.0h-7.27zM2010.06 861.1h7.27V907.1h-7.27zM2017.96 836.7h7.27V884.1h-7.27zM2025.87 871.5h7.27V884.1h-7.27zM2033.77 820.1h7.27V851.2h-7.27zM2041.67 868.9h7.27V887.8h-7.27zM2049.58 839.0h7.27V905.4h-7.27zM2057.49 845.1h7.27V893.9h-7.27zM2065.39 864.8h7.27V884.1h-7.27zM2073.30 793.3h7.27V845.9h-7.27zM2081.20 826.2h7.27V851.0h-7.27zM2089.11 851.2h7.27V884.7h-7.27zM2097.01 838.4h7.27V869.9h-7.27zM2104.91 839.0h7.27V859.7h-7.27zM2112.82 827.2h7.27V884.7h-7.27zM2120.73 851.6h7.27V875.0h-7.27zM2128.63 859.1h7.27V888.2h-7.27zM2136.53 852.0h7.27V906.9h-7.27zM2144.44 820.5h7.27V871.9h-7.27zM2152.35 819.1h7.27V872.9h-7.27zM2160.25 853.0h7.27V896.3h-7.27zM2168.15 851.6h7.27V887.6h-7.27zM2176.06 835.7h7.27V852.2h-7.27zM2183.97 840.0h7.27V887.6h-7.27zM2191.87 832.3h7.27V863.2h-7.27zM2199.78 851.2h7.27V896.3h-7.27zM2207.68 820.1h7.27V861.7h-7.27zM2215.59 874.3h7.27V896.3h-7.27zM2223.49 862.8h7.27V896.3h-7.27zM2231.39 827.2h7.27V844.5h-7.27zM2239.30 813.0h7.27V858.7h-7.27zM2247.20 846.1h7.27V880.0h-7.27zM2255.11 879.0h7.27V913.6h-7.27zM2263.01 832.3h7.27V862.4h-7.27zM2270.92 854.0h7.27V889.2h-7.27zM2278.83 876.4h7.27V913.6h-7.27zM2286.73 881.1h7.27V918.0h-7.27zM2294.64 873.3h7.27V915.6h-7.27zM2302.54 888.8h7.27V912.2h-7.27zM2310.45 901.0h7.27V932.9h-7.27zM2318.35 891.2h7.27V914.0h-7.27zM2326.26 875.4h7.27V896.3h-7.27zM2334.16 855.0h7.27V879.0h-7.27zM2342.07 871.9h7.27V912.6h-7.27zM2349.97 835.3h7.27V887.6h-7.27zM2357.88 872.9h7.27V891.2h-7.27zM2365.78 835.3h7.27V876.0h-7.27zM2373.68 830.2h7.27V865.8h-7.27zM2381.59 863.2h7.27V896.3h-7.27zM2389.49 820.1h7.27V852.0h-7.27zM2397.40 815.0h7.27V846.9h-7.27zM2405.31 863.8h7.27V883.7h-7.27zM2413.21 811.3h7.27V835.7h-7.27zM2421.12 846.1h7.27V886.1h-7.27zM2429.02 808.3h7.27V830.2h-7.27zM2436.93 816.4h7.27V875.0h-7.27zM2444.83 816.4h7.27V875.0h-7.27zM2452.74 815.0h7.27V845.9h-7.27zM2460.64 876.4h7.27V903.0h-7.27zM2468.55 873.9h7.27V895.3h-7.27zM2476.45 809.9h7.27V868.3h-7.27zM2484.36 798.3h7.27V824.8h-7.27zM2492.26 839.4h7.27V869.3h-7.27zM2500.16 842.0h7.27V863.8h-7.27zM2508.07 822.7h7.27V844.9h-7.27zM2515.97 833.3h7.27V865.2h-7.27zM2523.88 822.7h7.27V844.9h-7.27zM2531.78 808.9h7.27V851.2h-7.27zM2539.69 808.9h7.27V851.2h-7.27zM2547.60 837.8h7.27V864.2h-7.27zM2555.50 836.3h7.27V864.2h-7.27zM2563.41 810.9h7.27V860.3h-7.27zM2571.31 848.9h7.27V907.9h-7.27zM2579.22 817.0h7.27V858.1h-7.27zM2587.12 787.2h7.27V868.5h-7.27zM2595.03 832.7h7.27V868.9h-7.27zM2602.93 797.1h7.27V841.0h-7.27zM2610.84 860.3h7.27V894.3h-7.27zM2618.74 808.3h7.27V910.5h-7.27zM2626.64 784.7h7.27V866.2h-7.27zM2634.55 833.3h7.27V892.2h-7.27zM2642.45 838.8h7.27V892.2h-7.27zM2650.36 795.9h7.27V876.0h-7.27zM2658.26 840.0h7.27V896.3h-7.27zM2666.17 817.4h7.27V843.9h-7.27zM2674.08 843.5h7.27V879.0h-7.27zM2681.98 832.3h7.27V886.7h-7.27zM2689.89 840.8h7.27V862.4h-7.27zM2697.79 821.3h7.27V862.8h-7.27zM2705.70 870.9h7.27V895.9h-7.27zM2713.60 815.4h7.27V846.1h-7.27zM2721.51 839.4h7.27V879.0h-7.27zM2729.41 824.8h7.27V860.3h-7.27zM2737.32 844.5h7.27V876.0h-7.27zM2745.22 862.4h7.27V881.1h-7.27zM2753.12 840.8h7.27V862.4h-7.27zM2761.03 848.1h7.27V901.4h-7.27zM2768.93 826.2h7.27V885.7h-7.27zM2776.84 879.4h7.27V906.5h-7.27zM2784.74 837.0h7.27V869.9h-7.27zM2792.65 861.1h7.27V897.7h-7.27zM2800.56 854.2h7.27V907.9h-7.27zM2808.46 831.7h7.27V904.0h-7.27zM2816.37 861.1h7.27V927.8h-7.27zM2824.27 847.1h7.27V921.7h-7.27zM2832.18 835.3h7.27V909.5h-7.27z" fill="#2dd4bf"/>
<rect x="1132.60" y="1014.7" width="7.27" height="42.8" fill="#fdc1ad"/>
<rect x="1132.60" y="974.8" width="7.27" height="39.9" fill="#fde594"/>
<rect x="1132.60" y="903.4" width="7.27" height="71.4" fill="#16b5a4"/>
<rect x="1132.60" y="845.5" width="7.27" height="57.9" fill="#9cf3e4"/>
</g>
<path d="M182 1058.700 H2876" stroke="#e1e3ea" stroke-width="2.400" fill="none"/>
<path d="M359.9 1062 V1123.500 M539.1 1062 V1123.500 M718.3 1062 V1123.500 M897.5 1062 V1123.500 M1076.7 1062 V1123.500 M1255.9 1062 V1123.500 M1435.1 1062 V1123.500 M1614.3 1062 V1123.500 M1793.5 1062 V1123.500 M1972.7 1062 V1123.500 M2151.9 1062 V1123.500 M2331.1 1062 V1123.500 M2510.3 1062 V1123.500 M2689.5 1062 V1123.500 M2868.7 1062 V1123.500" stroke="#e9eaee" stroke-width="2" fill="none"/>
<polyline points="187.1,789.6 198.3,797.1 213.5,782.9 229.4,902.4 244.0,773.7 260.3,772.3 276.5,772.9 291.2,766.8 307.6,886.7 323.9,755.4 341.6,769.3 361.9,872.5 378.8,775.4 397.1,773.7 417.8,736.3 434.1,864.8 448.7,732.7 460.1,804.8 474.7,726.2 491.0,728.6 505.6,717.0 521.5,766.8 538.1,802.2 553.0,761.5 569.2,821.7 585.5,750.0 602.8,764.2 623.1,815.4 640.3,770.7 679.3,731.3 695.6,777.8 710.4,728.2 724.7,712.4 738.5,720.9 742.0,728.6 751.1,770.3 754.1,772.9 769.8,821.7 784.6,763.6 799.9,794.1 817.6,762.2 832.0,756.1 848.3,806.3 864.5,744.9 882.2,759.1 902.5,822.1 919.4,765.2 937.1,747.3 955.4,765.2 972.0,775.8 1009.8,744.9 1026.1,795.7 1042.4,756.1 1057.4,798.7 1075.3,761.1 1088.5,763.6 1104.2,812.0 1118.4,756.1 1134.3,778.4 1145.4,763.6 1157.6,775.4 1172.0,710.7 1186.1,751.1 1201.2,707.8 1218.0,788.3 1233.8,728.1 1251.7,788.2 1267.2,706.6 1282.1,757.9 1296.9,718.7 1314.5,783.6 1330.4,719.6 1347.6,753.4 1364.3,727.3 1381.4,780.0 1397.3,705.4 1414.5,763.3 1431.7,729.1 1447.3,766.1 1465.1,721.7 1479.7,755.1 1494.3,727.1 1511.6,755.8 1528.9,729.4 1545.5,764.0 1561.7,703.9 1575.8,788.8 1592.4,715.8 1610.1,767.4 1627.6,724.8 1642.4,760.1 1657.6,707.2 1673.9,760.4 1689.6,703.9 1707.3,764.2 1723.1,717.5 1740.7,766.8 1758.4,715.0 1774.5,770.9 1788.6,713.2 1803.3,750.2 1820.5,705.2 1836.4,779.0 1861.9,757.1 1869.4,709.7 1885.7,712.4 1900.3,749.3 1915.1,699.1 1932.8,699.8 1949.1,757.1 1968.0,747.5 1982.2,697.7 1999.5,711.3 2019.8,777.0 2036.1,718.0 2053.3,700.2 2071.2,717.8 2087.9,777.4 2107.8,711.7 2125.5,697.7 2140.7,753.4 2158.0,709.3 2172.9,764.2 2190.1,715.0 2205.4,716.4 2220.0,805.2 2236.3,725.6 2251.1,816.4 2261.7,732.7 2276.9,748.9 2293.7,807.9 2314.5,742.8 2331.3,728.6 2348.0,743.9 2364.3,739.8 2378.5,825.2 2396.2,745.9 2411.6,747.5 2425.8,838.0 2441.9,756.1 2449.6,765.2 2457.1,770.9 2467.9,763.2 2482.5,779.0 2498.4,779.0 2501.4,781.5 2508.6,776.4 2512.0,779.0 2524.2,712.0 2540.1,727.6 2555.9,739.2 2593.5,708.3 2610.2,723.5 2626.4,720.1 2643.7,793.0 2659.0,725.6 2674.6,727.6 2689.5,738.8 2704.7,735.7 2718.9,817.0 2732.7,731.7 2745.7,759.1 2760.0,760.7 2775.2,771.9 2790.9,743.3 2801.6,776.4 2805.7,783.5 2816.9,776.0 2833.1,793.3" fill="none" stroke="#3498db" stroke-width="4.200" stroke-linejoin="round" stroke-linecap="round"/>
<polyline points="187.1,954.6 199.3,962.4 214.6,947.7 229.8,978.6 245.0,938.6 260.3,937.4 277.6,938.0 291.8,931.5 308.0,965.4 324.7,902.0 362.3,974.6 379.2,939.0 397.5,921.7 418.8,901.4 435.1,943.7 449.7,897.9 460.5,935.5 475.7,891.2 491.0,893.3 506.2,944.1 521.9,880.7 538.7,943.0 553.6,875.0 570.2,954.2 586.5,863.2 603.8,877.0 624.1,948.5 641.3,883.1 658.2,915.0 680.4,892.8 696.6,949.1 711.1,890.2 724.3,908.5 735.9,915.2 751.1,902.0 766.7,950.2 781.2,892.8 796.4,922.7 814.1,891.2 828.9,885.5 845.0,934.5 861.3,873.9 878.5,887.2 899.1,950.8 916.3,893.3 933.6,876.0 951.9,893.3 968.6,950.8 988.9,886.7 1006.8,873.9 1022.4,924.8 1039.3,885.1 1053.5,927.2 1071.2,891.2 1086.5,892.2 1101.1,941.0 1101.3,859.7 1107.8,868.9 1114.9,874.6 1128.8,874.6 1135.3,943.0 1157.6,901.4 1172.0,868.1 1188.1,918.9 1205.2,862.7 1221.5,911.2 1236.6,879.3 1261.0,941.6 1285.4,920.3 1301.4,872.8 1318.2,916.3 1334.3,872.0 1352.1,922.5 1369.6,883.6 1391.0,949.8 1400.9,883.6 1418.2,908.4 1432.7,871.1 1447.0,911.0 1461.3,876.7 1478.4,927.4 1493.1,877.9 1509.7,908.6 1527.2,884.2 1542.1,928.8 1557.7,872.2 1575.7,925.8 1588.0,941.6 1606.0,872.9 1621.4,909.9 1636.7,878.1 1650.7,918.9 1666.5,860.5 1681.8,920.6 1697.9,861.6 1715.8,924.7 1733.7,862.6 1748.8,906.0 1765.9,866.8 1780.4,915.6 1798.1,880.5 1813.1,908.7 1834.5,952.5 1847.0,877.5 1855.2,939.0 1859.9,963.4 1874.5,929.8 1890.7,978.6 1906.0,920.7 1920.2,919.7 1937.5,968.5 1952.3,913.6 1970.4,952.2 1985.3,902.4 2022.9,933.3 2039.1,921.7 2056.8,904.4 2073.7,921.7 2090.3,933.3 2129.6,902.4 2154.4,875.0 2180.4,920.3 2212.9,883.1 2230.2,954.6 2245.4,884.1 2260.1,923.7 2275.9,892.2 2286.1,926.8 2291.1,934.9 2302.3,899.3 2318.1,915.6 2333.8,926.8 2371.4,896.7 2388.2,910.5 2403.9,907.9 2418.5,945.1 2436.4,913.6 2451.7,915.0 2465.9,957.3 2481.5,923.7 2496.8,938.0 2507.5,931.3 2522.4,946.5 2544.1,908.9 2558.0,934.5 2570.6,915.6 2585.8,930.9 2602.1,942.6 2639.7,912.0 2655.9,926.8 2665.7,798.1 2682.7,927.8 2698.2,853.0 2709.1,864.4 2724.8,897.7 2738.0,860.7 2749.8,885.1 2765.4,945.1 2781.3,897.3 2796.5,872.5 2810.8,968.5 2822.0,905.4 2838.8,921.7" fill="none" stroke="#ef4444" stroke-width="4.200" stroke-linejoin="round" stroke-linecap="round"/>
<circle cx="1136" cy="778.600" r="6.500" fill="#2b77b3"/>
<circle cx="1136" cy="942.500" r="6.500" fill="#c84c50"/>
</svg>
  <div id="tooltip" class="abs" style="left:1158px;top:626px;width:704px;height:312px;border-radius:9px;background:#131722;"></div>
  <svg width="720" height="330" viewBox="1145 620 720 330" style="left:1145px;top:620px">
    <path d="M1148.800 776.200 L1158.500 766.600 V785.800 Z" fill="#1b1b1d"/>
    <circle cx="1186.200" cy="702.100" r="12" fill="#12968a"/>
    <circle cx="1186.200" cy="734" r="12" fill="#2dd4bf"/>
    <circle cx="1186.200" cy="766" r="12" fill="#fcd34f"/>
    <circle cx="1186.200" cy="798.100" r="12" fill="#fc9779"/>
    <rect x="1174" y="827.100" width="24.800" height="6" fill="#3498db"/>
    <rect x="1174" y="859" width="24.800" height="6" fill="#ef4444"/>
  </svg>
<span class="t" id="t135" style="left:1174.9px;top:641.0px;font-size:25.08px;color:#f4f5f7;letter-spacing:-0.170px;">June 7, 2025</span>
<span class="t" id="t136" style="left:1328.8px;top:637.0px;font-size:29.14px;color:#f4f5f7;letter-spacing:0.000px;">|</span>
<span class="t" id="t137" style="left:1344.1px;top:641.0px;font-size:25.08px;color:#f4f5f7;letter-spacing:0.101px;">7:00 AM:</span>
<span class="t" id="t138" style="left:1206.2px;top:689.0px;font-size:25.08px;color:#f4f5f7;letter-spacing:0.076px;">On-Demand Spend</span>
<span class="t" id="t139" style="left:1749.6px;top:690.0px;font-size:24.12px;color:#f4f5f7;-webkit-text-stroke:0.87px #f4f5f7;letter-spacing:1.232px;">$252.97</span>
<span class="t" id="t140" style="left:1206.2px;top:721.0px;font-size:25.08px;color:#f4f5f7;letter-spacing:0.144px;">Spot Usage</span>
<span class="t" id="t141" style="left:1753.0px;top:722.0px;font-size:24.12px;color:#f4f5f7;-webkit-text-stroke:0.87px #f4f5f7;letter-spacing:0.665px;">$178.32</span>
<span class="t" id="t142" style="left:1206.0px;top:753.0px;font-size:25.08px;color:#f4f5f7;letter-spacing:0.119px;">Reserved Instance Discounted Spend</span>
<span class="t" id="t143" style="left:1753.0px;top:754.0px;font-size:24.12px;color:#f4f5f7;-webkit-text-stroke:0.87px #f4f5f7;letter-spacing:0.665px;">$145.75</span>
<span class="t" id="t144" style="left:1206.2px;top:785.0px;font-size:25.08px;color:#f4f5f7;letter-spacing:0.005px;">Savings Plan Discounted Spend</span>
<span class="t" id="t145" style="left:1750.6px;top:786.0px;font-size:24.12px;color:#f4f5f7;-webkit-text-stroke:0.87px #f4f5f7;letter-spacing:1.065px;">$164.02</span>
<span class="t" id="t146" style="left:1206.2px;top:817.0px;font-size:25.08px;color:#f4f5f7;letter-spacing:0.101px;">Coverage</span>
<span class="t" id="t147" style="left:1761.3px;top:818.0px;font-size:24.12px;color:#f4f5f7;-webkit-text-stroke:0.87px #f4f5f7;letter-spacing:0.220px;">61.09%</span>
<span class="t" id="t148" style="left:1206.2px;top:849.0px;font-size:25.08px;color:#f4f5f7;letter-spacing:-0.174px;">Savings Rate</span>
<span class="t" id="t149" style="left:1761.6px;top:850.0px;font-size:24.12px;color:#f4f5f7;-webkit-text-stroke:0.87px #f4f5f7;letter-spacing:0.160px;">42.91%</span>
<span class="t" id="t150" style="left:1685.7px;top:897.0px;font-size:25.08px;color:#f4f5f7;letter-spacing:0.566px;">Total:</span>
<span class="t" id="t151" style="left:1754.9px;top:898.0px;font-size:24.12px;color:#f4f5f7;-webkit-text-stroke:0.87px #f4f5f7;letter-spacing:0.432px;">$741.06</span>
  <svg width="40" height="50" viewBox="1125 775 40 50" style="left:1125px;top:775px">
    <path d="M1135.500 784.800 V808.600 L1141.400 803.300 L1146 812.500 L1150.100 810.800 L1145.900 801.300 L1151.800 800.700 Z" fill="#000" stroke="#fff" stroke-width="3.400" stroke-linejoin="miter" paint-order="stroke" style="filter:drop-shadow(0 1px 1.500px rgba(0,0,0,.45))"/>
  </svg>
  <div id="grid">
    <div class="abs" style="left:34px;top:1150px;width:2956px;height:2px;background:#e1e3ea"></div>
    <div class="abs" style="left:34px;top:1238.500px;width:2956px;height:3.500px;background:#e1e3ea"></div>
    <div class="vsep" style="left:158px"></div><div class="vsep" style="left:1076.500px"></div><div class="vsep" style="left:1376px"></div><div class="vsep" style="left:1676px"></div>
    <div class="vsep" style="left:1976px"></div><div class="vsep" style="left:2276px"></div><div class="vsep" style="left:2575.800px"></div><div class="vsep" style="left:2876px"></div>
    <div class="rsep" style="top:1340px"></div><div class="rsep" style="top:1440px"></div><div class="rsep" style="top:1540.500px"></div>
    <div class="ibtn" style="top:1264.7px"></div>
<svg width="40" height="40" viewBox="76 1272 40 40" style="left:76px;top:1272.0px"><g fill="none" stroke="#111520" stroke-width="3.400"><path d="M97.500 1280.300 H83.800 V1304 H108.100 V1291.300"/></g><g stroke="#111520" stroke-width="3" fill="none"><path d="M101.300 1282.700 H110.100 M105.700 1278.300 V1287.100"/><path d="M89.500 1288 V1300 M96 1284.900 V1300 M102.400 1293 V1300"/></g></svg>
<div class="ibtn" style="top:1364.8px"></div>
<svg width="40" height="40" viewBox="76 1272 40 40" style="left:76px;top:1372.1px"><g fill="none" stroke="#111520" stroke-width="3.400"><path d="M97.500 1280.300 H83.800 V1304 H108.100 V1291.300"/></g><g stroke="#111520" stroke-width="3" fill="none"><path d="M101.300 1282.700 H110.100 M105.700 1278.300 V1287.100"/><path d="M89.500 1288 V1300 M96 1284.900 V1300 M102.400 1293 V1300"/></g></svg>
<div class="ibtn" style="top:1464.9px"></div>
<svg width="40" height="40" viewBox="76 1272 40 40" style="left:76px;top:1472.2px"><g fill="none" stroke="#111520" stroke-width="3.400"><path d="M97.500 1280.300 H83.800 V1304 H108.100 V1291.300"/></g><g stroke="#111520" stroke-width="3" fill="none"><path d="M101.300 1282.700 H110.100 M105.700 1278.300 V1287.100"/><path d="M89.500 1288 V1300 M96 1284.900 V1300 M102.400 1293 V1300"/></g></svg>
<div class="ibtn" style="top:1565.0px"></div>
<svg width="40" height="40" viewBox="76 1272 40 40" style="left:76px;top:1572.3px"><g fill="none" stroke="#111520" stroke-width="3.400"><path d="M97.500 1280.300 H83.800 V1304 H108.100 V1291.300"/></g><g stroke="#111520" stroke-width="3" fill="none"><path d="M101.300 1282.700 H110.100 M105.700 1278.300 V1287.100"/><path d="M89.500 1288 V1300 M96 1284.900 V1300 M102.400 1293 V1300"/></g></svg>
    <svg width="3024" height="60" viewBox="0 1170 3024 60" style="left:0;top:1170px">
      <path d="M352.100 1188.900 H379.800 M352.100 1196.300 H370 M352.100 1203.800 H361.400" stroke="#5a6273" stroke-width="2.8" fill="none"/>
      <path d="M1028.100 1186 V1206.500 M1017.300 1196.200 L1028.100 1207 L1038.900 1196.200" stroke="#8a2be2" stroke-width="3.300" fill="none" stroke-linecap="round" stroke-linejoin="round"/>
      <g stroke="#5a6273" stroke-width="2.8" fill="none" id="sorticons"><path d="M1314.7 1178.800 H1341.5 M1314.7 1186.400 H1331.8 M1314.7 1193.900 H1323.4"/><path d="M1614.7 1178.800 H1641.5 M1614.7 1186.400 H1631.8 M1614.7 1193.900 H1623.4"/><path d="M1914.7 1178.800 H1941.5 M1914.7 1186.400 H1931.8 M1914.7 1193.900 H1923.4"/><path d="M2214.7 1178.800 H2241.5 M2214.7 1186.400 H2231.8 M2214.7 1193.900 H2223.4"/><path d="M2514.7 1178.800 H2541.5 M2514.7 1186.400 H2531.8 M2514.7 1193.900 H2523.4"/><path d="M2814.7 1178.800 H2841.5 M2814.7 1186.400 H2831.8 M2814.7 1193.900 H2823.4"/></g>
    </svg>
<span class="t" id="t34" style="left:192.2px;top:1184.0px;font-size:24.03px;color:#5a6273;-webkit-text-stroke:0.87px #5a6273;letter-spacing:0.919px;">Charge Type</span>
<span class="t" id="t35" style="left:945.9px;top:1184.0px;font-size:24.03px;color:#8a2be2;-webkit-text-stroke:0.87px #8a2be2;letter-spacing:1.186px;">Total</span>
<span class="t" id="t36" style="left:1111.2px;top:1168.0px;font-size:23.83px;color:#3f4756;-webkit-text-stroke:0.48px #3f4756;letter-spacing:0.835px;">June 2, 2025</span>
<span class="t" id="t37" style="left:1110.0px;top:1200.0px;font-size:23.83px;color:#3f4756;letter-spacing:0.694px;">12:00 AM</span>
<span class="t" id="t38" style="left:1411.3px;top:1168.0px;font-size:23.83px;color:#3f4756;-webkit-text-stroke:0.48px #3f4756;letter-spacing:0.835px;">June 2, 2025</span>
<span class="t" id="t39" style="left:1410.1px;top:1200.0px;font-size:23.83px;color:#3f4756;letter-spacing:0.685px;">1:00 AM</span>
<span class="t" id="t40" style="left:1711.4px;top:1168.0px;font-size:23.83px;color:#3f4756;-webkit-text-stroke:0.48px #3f4756;letter-spacing:0.835px;">June 2, 2025</span>
<span class="t" id="t41" style="left:1710.2px;top:1200.0px;font-size:23.83px;color:#3f4756;letter-spacing:1.268px;">2:00 AM</span>
<span class="t" id="t42" style="left:2011.5px;top:1168.0px;font-size:23.83px;color:#3f4756;-webkit-text-stroke:0.48px #3f4756;letter-spacing:0.835px;">June 2, 2025</span>
<span class="t" id="t43" style="left:2011.3px;top:1200.0px;font-size:23.83px;color:#3f4756;letter-spacing:1.185px;">3:00 AM</span>
<span class="t" id="t44" style="left:2311.6px;top:1168.0px;font-size:23.83px;color:#3f4756;-webkit-text-stroke:0.48px #3f4756;letter-spacing:0.835px;">June 2, 2025</span>
<span class="t" id="t45" style="left:2311.4px;top:1200.0px;font-size:23.83px;color:#3f4756;letter-spacing:1.268px;">4:00 AM</span>
<span class="t" id="t46" style="left:2611.7px;top:1168.0px;font-size:23.83px;color:#3f4756;-webkit-text-stroke:0.48px #3f4756;letter-spacing:0.835px;">June 2, 2025</span>
<span class="t" id="t47" style="left:2611.5px;top:1200.0px;font-size:23.83px;color:#3f4756;letter-spacing:1.018px;">5:00 AM</span>
    <div class="abs" style="left:2880px;top:1152px;width:110px;height:86px;overflow:hidden"><div class="abs" style="left:-2880px;top:-1152px;width:3024px;height:1300px">
<span class="t" id="t152" style="left:2911.2px;top:1168.0px;font-size:23.83px;color:#3f4756;-webkit-text-stroke:0.48px #3f4756;letter-spacing:0.835px;">June 2, 2025</span>
<span class="t" id="t153" style="left:2910.0px;top:1200.0px;font-size:23.83px;color:#3f4756;letter-spacing:1.018px;">6:00 PM</span>
</div></div>
<span class="t" id="t48" style="left:192.3px;top:1278.0px;font-size:28.42px;color:#0f121b;letter-spacing:0.625px;">On-Demand Spend</span>
<span class="t" id="t49" style="left:881.3px;top:1279.0px;font-size:27.74px;color:#0f121b;letter-spacing:0.919px;">$128,924.59</span>
<span class="t" id="t50" style="left:1239.0px;top:1279.0px;font-size:27.74px;color:#0f121b;letter-spacing:0.862px;">$413.02</span>
<span class="t" id="t51" style="left:1533.0px;top:1279.0px;font-size:27.74px;color:#0f121b;letter-spacing:1.862px;">$396.48</span>
<span class="t" id="t52" style="left:1835.0px;top:1279.0px;font-size:27.74px;color:#0f121b;letter-spacing:1.529px;">$408.92</span>
<span class="t" id="t53" style="left:2138.4px;top:1279.0px;font-size:27.74px;color:#0f121b;letter-spacing:0.962px;">$321.43</span>
<span class="t" id="t54" style="left:2450.0px;top:1279.0px;font-size:27.74px;color:#0f121b;letter-spacing:-0.971px;">$317.15</span>
<span class="t" id="t55" style="left:2734.0px;top:1279.0px;font-size:27.74px;color:#0f121b;letter-spacing:1.695px;">$383.42</span>
<span class="t" id="t56" style="left:192.3px;top:1378.0px;font-size:28.42px;color:#0f121b;letter-spacing:0.452px;">Savings Plan Discounted Spend</span>
<span class="t" id="t57" style="left:911.3px;top:1379.0px;font-size:27.74px;color:#0f121b;letter-spacing:-0.598px;">$13,217.81</span>
<span class="t" id="t58" style="left:1255.0px;top:1379.0px;font-size:27.74px;color:#0f121b;letter-spacing:0.919px;">$70.32</span>
<span class="t" id="t59" style="left:1554.0px;top:1379.0px;font-size:27.74px;color:#0f121b;letter-spacing:1.119px;">$72.23</span>
<span class="t" id="t60" style="left:1852.0px;top:1379.0px;font-size:27.74px;color:#0f121b;letter-spacing:1.519px;">$69.94</span>
<span class="t" id="t61" style="left:2156.0px;top:1379.0px;font-size:27.74px;color:#0f121b;letter-spacing:0.719px;">$74.32</span>
<span class="t" id="t62" style="left:2455.0px;top:1379.0px;font-size:27.74px;color:#0f121b;letter-spacing:0.919px;">$75.54</span>
<span class="t" id="t63" style="left:2760.0px;top:1379.0px;font-size:27.74px;color:#0f121b;letter-spacing:-0.081px;">$71.52</span>
<span class="t" id="t64" style="left:191.3px;top:1478.0px;font-size:28.42px;color:#0f121b;letter-spacing:0.630px;">Reserved Instances Discounted Spend</span>
<span class="t" id="t65" style="left:883.8px;top:1479.0px;font-size:27.74px;color:#0f121b;letter-spacing:0.669px;">$173,456.67</span>
<span class="t" id="t66" style="left:1239.0px;top:1479.0px;font-size:27.74px;color:#0f121b;letter-spacing:0.862px;">$387.38</span>
<span class="t" id="t67" style="left:1539.0px;top:1479.0px;font-size:27.74px;color:#0f121b;letter-spacing:0.862px;">$387.38</span>
<span class="t" id="t68" style="left:1839.0px;top:1479.0px;font-size:27.74px;color:#0f121b;letter-spacing:0.862px;">$387.38</span>
<span class="t" id="t69" style="left:2139.0px;top:1479.0px;font-size:27.74px;color:#0f121b;letter-spacing:0.862px;">$387.38</span>
<span class="t" id="t70" style="left:2439.0px;top:1479.0px;font-size:27.74px;color:#0f121b;letter-spacing:0.862px;">$387.38</span>
<span class="t" id="t71" style="left:2739.0px;top:1479.0px;font-size:27.74px;color:#0f121b;letter-spacing:0.862px;">$387.38</span>
<span class="t" id="t72" style="left:192.3px;top:1578.0px;font-size:28.42px;color:#0f121b;letter-spacing:0.674px;">Spot Instance</span>
<span class="t" id="t73" style="left:897.3px;top:1579.0px;font-size:27.74px;color:#0f121b;letter-spacing:0.957px;">$10,844.54</span>
<span class="t" id="t74" style="left:1239.0px;top:1579.0px;font-size:27.74px;color:#0f121b;letter-spacing:0.862px;">$135.00</span>
<span class="t" id="t75" style="left:1539.0px;top:1579.0px;font-size:27.74px;color:#0f121b;letter-spacing:0.862px;">$135.00</span>
<span class="t" id="t76" style="left:1839.0px;top:1579.0px;font-size:27.74px;color:#0f121b;letter-spacing:0.862px;">$135.00</span>
<span class="t" id="t77" style="left:2139.0px;top:1579.0px;font-size:27.74px;color:#0f121b;letter-spacing:0.862px;">$135.00</span>
<span class="t" id="t78" style="left:2439.0px;top:1579.0px;font-size:27.74px;color:#0f121b;letter-spacing:0.862px;">$135.00</span>
<span class="t" id="t79" style="left:2739.0px;top:1579.0px;font-size:27.74px;color:#0f121b;letter-spacing:0.862px;">$135.00</span>
  </div>
</main>
</div>
<script>(function(){var a=document.getElementById("app"),k=window.innerWidth/3024;if(k>0&&Math.abs(k-1)>0.01){a.style.transformOrigin="0 0";a.style.transform="scale("+k+")";}})();</script>
</body>
</html>
